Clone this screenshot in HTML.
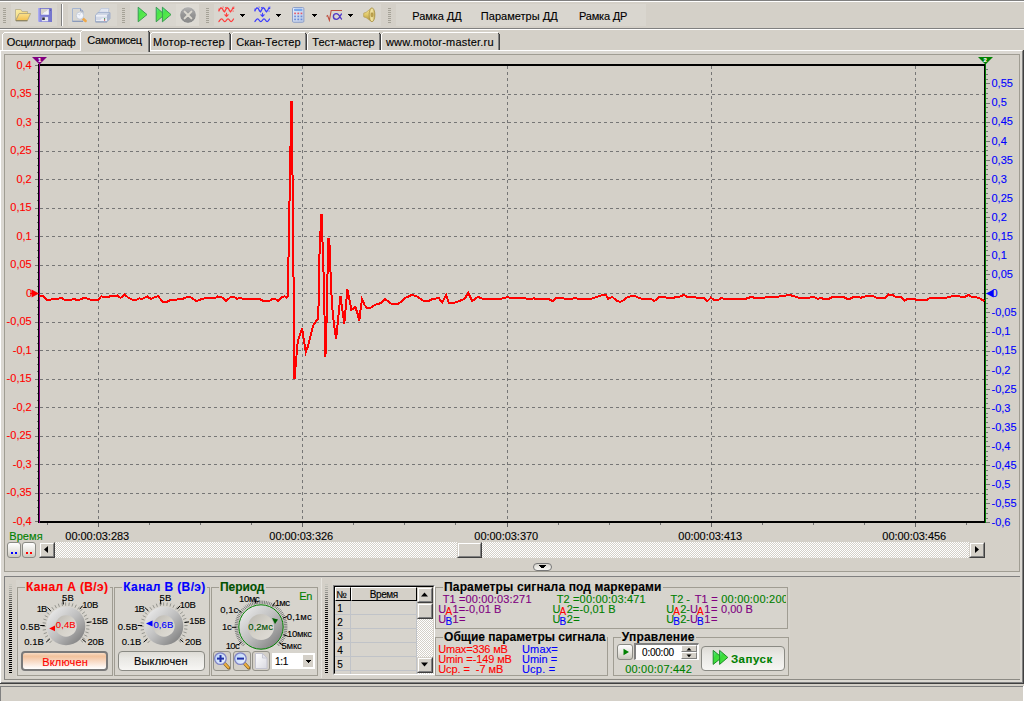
<!DOCTYPE html>
<html><head><meta charset="utf-8"><title>Motor-Master</title><style>
html,body{margin:0;padding:0;}
body{width:1024px;height:702px;overflow:hidden;background:#d4d0c8;position:relative;font-family:"Liberation Sans",sans-serif;}
div,span.t,svg{position:absolute;box-sizing:border-box;}
span.t{white-space:pre;font-family:"Liberation Sans",sans-serif;-webkit-text-stroke:0.12px currentColor;}
.dith{background-image:conic-gradient(#fff 25%,#d4d0c8 0 50%,#fff 0 75%,#d4d0c8 0);background-size:2px 2px;}
</style></head><body>
<div style="left:0px;top:0px;width:1024px;height:1px;background:#808080"></div>
<div style="left:0px;top:1px;width:1024px;height:1px;background:#fff"></div>
<div style="left:11px;top:4px;width:46px;height:22px;background:#d9d6cf"></div>
<div style="left:68px;top:4px;width:49px;height:22px;background:#d9d6cf"></div>
<div style="left:130px;top:4px;width:69px;height:22px;background:#d9d6cf"></div>
<div style="left:214px;top:4px;width:167px;height:22px;background:#d9d6cf"></div>
<div style="left:396px;top:4px;width:250px;height:22px;background:#d9d6cf"></div>
<div style="left:3px;top:8px;width:3px;height:1px;background:#a5a297"></div>
<div style="left:3px;top:10px;width:3px;height:1px;background:#a5a297"></div>
<div style="left:3px;top:12px;width:3px;height:1px;background:#a5a297"></div>
<div style="left:3px;top:14px;width:3px;height:1px;background:#a5a297"></div>
<div style="left:3px;top:16px;width:3px;height:1px;background:#a5a297"></div>
<div style="left:3px;top:18px;width:3px;height:1px;background:#a5a297"></div>
<div style="left:3px;top:20px;width:3px;height:1px;background:#a5a297"></div>
<div style="left:3px;top:22px;width:3px;height:1px;background:#a5a297"></div>
<div style="left:122px;top:8px;width:3px;height:1px;background:#a5a297"></div>
<div style="left:122px;top:10px;width:3px;height:1px;background:#a5a297"></div>
<div style="left:122px;top:12px;width:3px;height:1px;background:#a5a297"></div>
<div style="left:122px;top:14px;width:3px;height:1px;background:#a5a297"></div>
<div style="left:122px;top:16px;width:3px;height:1px;background:#a5a297"></div>
<div style="left:122px;top:18px;width:3px;height:1px;background:#a5a297"></div>
<div style="left:122px;top:20px;width:3px;height:1px;background:#a5a297"></div>
<div style="left:122px;top:22px;width:3px;height:1px;background:#a5a297"></div>
<div style="left:206px;top:8px;width:3px;height:1px;background:#a5a297"></div>
<div style="left:206px;top:10px;width:3px;height:1px;background:#a5a297"></div>
<div style="left:206px;top:12px;width:3px;height:1px;background:#a5a297"></div>
<div style="left:206px;top:14px;width:3px;height:1px;background:#a5a297"></div>
<div style="left:206px;top:16px;width:3px;height:1px;background:#a5a297"></div>
<div style="left:206px;top:18px;width:3px;height:1px;background:#a5a297"></div>
<div style="left:206px;top:20px;width:3px;height:1px;background:#a5a297"></div>
<div style="left:206px;top:22px;width:3px;height:1px;background:#a5a297"></div>
<div style="left:388px;top:8px;width:3px;height:1px;background:#a5a297"></div>
<div style="left:388px;top:10px;width:3px;height:1px;background:#a5a297"></div>
<div style="left:388px;top:12px;width:3px;height:1px;background:#a5a297"></div>
<div style="left:388px;top:14px;width:3px;height:1px;background:#a5a297"></div>
<div style="left:388px;top:16px;width:3px;height:1px;background:#a5a297"></div>
<div style="left:388px;top:18px;width:3px;height:1px;background:#a5a297"></div>
<div style="left:388px;top:20px;width:3px;height:1px;background:#a5a297"></div>
<div style="left:388px;top:22px;width:3px;height:1px;background:#a5a297"></div>
<div style="left:61px;top:4px;width:1px;height:22px;background:#808080"></div>
<div style="left:62px;top:4px;width:1px;height:22px;background:#fff"></div>
<div style="left:0px;top:28px;width:1024px;height:1px;background:#808080"></div>
<div style="left:0px;top:29px;width:1024px;height:1px;background:#fff"></div>
<span id="t0" class="t" style="left:412.34px;top:10.56px;font-size:11px;line-height:11px;color:#000;letter-spacing:-0.058px;">Рамка ДД</span>
<span id="t1" class="t" style="left:480.84px;top:10.56px;font-size:11px;line-height:11px;color:#000;letter-spacing:0.019px;">Параметры ДД</span>
<span id="t2" class="t" style="left:578.94px;top:10.56px;font-size:11px;line-height:11px;color:#000;letter-spacing:-0.169px;">Рамка ДР</span>
<div style="left:0px;top:50px;width:1022px;height:1px;background:#fff"></div>
<div style="left:0px;top:50px;width:1px;height:633px;background:#fff"></div>
<div style="left:1022px;top:51px;width:1px;height:632px;background:#808080"></div>
<div style="left:1023px;top:50px;width:1px;height:634px;background:#404040"></div>
<div style="left:1px;top:682px;width:1022px;height:1px;background:#808080"></div>
<div style="left:0px;top:683px;width:1024px;height:1px;background:#404040"></div>
<div style="left:1px;top:51px;width:1021px;height:631px;background:#dbd8d2"></div>
<div style="left:4px;top:32px;width:76px;height:1px;background:#fff"></div>
<div style="left:3px;top:33px;width:1px;height:1px;background:#fff"></div>
<div style="left:2px;top:34px;width:1px;height:16px;background:#fff"></div>
<div style="left:80px;top:34px;width:1px;height:16px;background:#808080"></div>
<div style="left:81px;top:34px;width:1px;height:16px;background:#404040"></div>
<div style="left:80px;top:33px;width:1px;height:1px;background:#404040"></div>
<span id="t3" class="t" style="left:6.84px;top:36.56px;font-size:11px;line-height:11px;color:#000;letter-spacing:-0.188px;">Осциллограф</span>
<div style="left:152px;top:32px;width:77px;height:1px;background:#fff"></div>
<div style="left:151px;top:33px;width:1px;height:1px;background:#fff"></div>
<div style="left:150px;top:34px;width:1px;height:16px;background:#fff"></div>
<div style="left:229px;top:34px;width:1px;height:16px;background:#808080"></div>
<div style="left:230px;top:34px;width:1px;height:16px;background:#404040"></div>
<div style="left:229px;top:33px;width:1px;height:1px;background:#404040"></div>
<span id="t4" class="t" style="left:153.04px;top:36.56px;font-size:11px;line-height:11px;color:#000;letter-spacing:0.179px;">Мотор-тестер</span>
<div style="left:233px;top:32px;width:72px;height:1px;background:#fff"></div>
<div style="left:232px;top:33px;width:1px;height:1px;background:#fff"></div>
<div style="left:231px;top:34px;width:1px;height:16px;background:#fff"></div>
<div style="left:305px;top:34px;width:1px;height:16px;background:#808080"></div>
<div style="left:306px;top:34px;width:1px;height:16px;background:#404040"></div>
<div style="left:305px;top:33px;width:1px;height:1px;background:#404040"></div>
<span id="t5" class="t" style="left:236.14px;top:36.56px;font-size:11px;line-height:11px;color:#000;letter-spacing:0.071px;">Скан-Тестер</span>
<div style="left:309px;top:32px;width:70px;height:1px;background:#fff"></div>
<div style="left:308px;top:33px;width:1px;height:1px;background:#fff"></div>
<div style="left:307px;top:34px;width:1px;height:16px;background:#fff"></div>
<div style="left:379px;top:34px;width:1px;height:16px;background:#808080"></div>
<div style="left:380px;top:34px;width:1px;height:16px;background:#404040"></div>
<div style="left:379px;top:33px;width:1px;height:1px;background:#404040"></div>
<span id="t6" class="t" style="left:312.34px;top:36.56px;font-size:11px;line-height:11px;color:#000;letter-spacing:-0.041px;">Тест-мастер</span>
<div style="left:383px;top:32px;width:115px;height:1px;background:#fff"></div>
<div style="left:382px;top:33px;width:1px;height:1px;background:#fff"></div>
<div style="left:381px;top:34px;width:1px;height:16px;background:#fff"></div>
<div style="left:498px;top:34px;width:1px;height:16px;background:#808080"></div>
<div style="left:499px;top:34px;width:1px;height:16px;background:#404040"></div>
<div style="left:498px;top:33px;width:1px;height:1px;background:#404040"></div>
<span id="t7" class="t" style="left:385.94px;top:36.56px;font-size:11px;line-height:11px;color:#000;letter-spacing:0.205px;">www.motor-master.ru</span>
<div style="left:80px;top:30px;width:70px;height:22px;background:#d4d0c8"></div>
<div style="left:82px;top:30px;width:66px;height:1px;background:#fff"></div>
<div style="left:81px;top:31px;width:1px;height:1px;background:#fff"></div>
<div style="left:80px;top:32px;width:1px;height:19px;background:#fff"></div>
<div style="left:148px;top:32px;width:1px;height:20px;background:#808080"></div>
<div style="left:149px;top:32px;width:1px;height:20px;background:#404040"></div>
<div style="left:148px;top:31px;width:1px;height:1px;background:#404040"></div>
<span id="t8" class="t" style="left:87.34px;top:34.56px;font-size:11px;line-height:11px;color:#000;letter-spacing:-0.397px;">Самописец</span>
<div style="left:4px;top:54px;width:1016px;height:518px;border:1px solid #a09d93;background:#d4d0c8"></div>
<svg style="left:0;top:0" width="1024" height="702" viewBox="0 0 1024 702" shape-rendering="crispEdges"><line x1="40" x2="984" y1="94.5" y2="94.5" stroke="#767676" stroke-width="1" stroke-dasharray="3 3"/><line x1="40" x2="984" y1="122.5" y2="122.5" stroke="#767676" stroke-width="1" stroke-dasharray="3 3"/><line x1="40" x2="984" y1="151.5" y2="151.5" stroke="#767676" stroke-width="1" stroke-dasharray="3 3"/><line x1="40" x2="984" y1="179.5" y2="179.5" stroke="#767676" stroke-width="1" stroke-dasharray="3 3"/><line x1="40" x2="984" y1="208.5" y2="208.5" stroke="#767676" stroke-width="1" stroke-dasharray="3 3"/><line x1="40" x2="984" y1="236.5" y2="236.5" stroke="#767676" stroke-width="1" stroke-dasharray="3 3"/><line x1="40" x2="984" y1="265.5" y2="265.5" stroke="#767676" stroke-width="1" stroke-dasharray="3 3"/><line x1="40" x2="984" y1="293.5" y2="293.5" stroke="#767676" stroke-width="1" stroke-dasharray="3 3"/><line x1="40" x2="984" y1="322.5" y2="322.5" stroke="#767676" stroke-width="1" stroke-dasharray="3 3"/><line x1="40" x2="984" y1="350.5" y2="350.5" stroke="#767676" stroke-width="1" stroke-dasharray="3 3"/><line x1="40" x2="984" y1="379.5" y2="379.5" stroke="#767676" stroke-width="1" stroke-dasharray="3 3"/><line x1="40" x2="984" y1="407.5" y2="407.5" stroke="#767676" stroke-width="1" stroke-dasharray="3 3"/><line x1="40" x2="984" y1="436.5" y2="436.5" stroke="#767676" stroke-width="1" stroke-dasharray="3 3"/><line x1="40" x2="984" y1="464.5" y2="464.5" stroke="#767676" stroke-width="1" stroke-dasharray="3 3"/><line x1="40" x2="984" y1="493.5" y2="493.5" stroke="#767676" stroke-width="1" stroke-dasharray="3 3"/><line x1="98.5" x2="98.5" y1="66" y2="521" stroke="#767676" stroke-width="1" stroke-dasharray="3 3"/><line x1="98.5" x2="98.5" y1="523" y2="527" stroke="#606060" stroke-width="1"/><line x1="302.5" x2="302.5" y1="66" y2="521" stroke="#767676" stroke-width="1" stroke-dasharray="3 3"/><line x1="302.5" x2="302.5" y1="523" y2="527" stroke="#606060" stroke-width="1"/><line x1="507.5" x2="507.5" y1="66" y2="521" stroke="#767676" stroke-width="1" stroke-dasharray="3 3"/><line x1="507.5" x2="507.5" y1="523" y2="527" stroke="#606060" stroke-width="1"/><line x1="711.5" x2="711.5" y1="66" y2="521" stroke="#767676" stroke-width="1" stroke-dasharray="3 3"/><line x1="711.5" x2="711.5" y1="523" y2="527" stroke="#606060" stroke-width="1"/><line x1="915.5" x2="915.5" y1="66" y2="521" stroke="#767676" stroke-width="1" stroke-dasharray="3 3"/><line x1="915.5" x2="915.5" y1="523" y2="527" stroke="#606060" stroke-width="1"/><line x1="47.5" x2="47.5" y1="523" y2="525" stroke="#707070" stroke-width="1"/><line x1="149.5" x2="149.5" y1="523" y2="525" stroke="#707070" stroke-width="1"/><line x1="200.5" x2="200.5" y1="523" y2="525" stroke="#707070" stroke-width="1"/><line x1="251.5" x2="251.5" y1="523" y2="525" stroke="#707070" stroke-width="1"/><line x1="353.5" x2="353.5" y1="523" y2="525" stroke="#707070" stroke-width="1"/><line x1="404.5" x2="404.5" y1="523" y2="525" stroke="#707070" stroke-width="1"/><line x1="455.5" x2="455.5" y1="523" y2="525" stroke="#707070" stroke-width="1"/><line x1="558.5" x2="558.5" y1="523" y2="525" stroke="#707070" stroke-width="1"/><line x1="609.5" x2="609.5" y1="523" y2="525" stroke="#707070" stroke-width="1"/><line x1="660.5" x2="660.5" y1="523" y2="525" stroke="#707070" stroke-width="1"/><line x1="762.5" x2="762.5" y1="523" y2="525" stroke="#707070" stroke-width="1"/><line x1="813.5" x2="813.5" y1="523" y2="525" stroke="#707070" stroke-width="1"/><line x1="864.5" x2="864.5" y1="523" y2="525" stroke="#707070" stroke-width="1"/><line x1="966.5" x2="966.5" y1="523" y2="525" stroke="#707070" stroke-width="1"/><line x1="35" x2="38" y1="65.5" y2="65.5" stroke="#767676" stroke-width="1"/><line x1="37" x2="38" y1="72.5" y2="72.5" stroke="#6a6a6a" stroke-width="1"/><line x1="37" x2="38" y1="79.5" y2="79.5" stroke="#6a6a6a" stroke-width="1"/><line x1="37" x2="38" y1="86.5" y2="86.5" stroke="#6a6a6a" stroke-width="1"/><line x1="35" x2="38" y1="94.5" y2="94.5" stroke="#767676" stroke-width="1"/><line x1="37" x2="38" y1="101.5" y2="101.5" stroke="#6a6a6a" stroke-width="1"/><line x1="37" x2="38" y1="108.5" y2="108.5" stroke="#6a6a6a" stroke-width="1"/><line x1="37" x2="38" y1="115.5" y2="115.5" stroke="#6a6a6a" stroke-width="1"/><line x1="35" x2="38" y1="122.5" y2="122.5" stroke="#767676" stroke-width="1"/><line x1="37" x2="38" y1="129.5" y2="129.5" stroke="#6a6a6a" stroke-width="1"/><line x1="37" x2="38" y1="136.5" y2="136.5" stroke="#6a6a6a" stroke-width="1"/><line x1="37" x2="38" y1="143.5" y2="143.5" stroke="#6a6a6a" stroke-width="1"/><line x1="35" x2="38" y1="151.5" y2="151.5" stroke="#767676" stroke-width="1"/><line x1="37" x2="38" y1="158.5" y2="158.5" stroke="#6a6a6a" stroke-width="1"/><line x1="37" x2="38" y1="165.5" y2="165.5" stroke="#6a6a6a" stroke-width="1"/><line x1="37" x2="38" y1="172.5" y2="172.5" stroke="#6a6a6a" stroke-width="1"/><line x1="35" x2="38" y1="179.5" y2="179.5" stroke="#767676" stroke-width="1"/><line x1="37" x2="38" y1="186.5" y2="186.5" stroke="#6a6a6a" stroke-width="1"/><line x1="37" x2="38" y1="193.5" y2="193.5" stroke="#6a6a6a" stroke-width="1"/><line x1="37" x2="38" y1="200.5" y2="200.5" stroke="#6a6a6a" stroke-width="1"/><line x1="35" x2="38" y1="208.5" y2="208.5" stroke="#767676" stroke-width="1"/><line x1="37" x2="38" y1="215.5" y2="215.5" stroke="#6a6a6a" stroke-width="1"/><line x1="37" x2="38" y1="222.5" y2="222.5" stroke="#6a6a6a" stroke-width="1"/><line x1="37" x2="38" y1="229.5" y2="229.5" stroke="#6a6a6a" stroke-width="1"/><line x1="35" x2="38" y1="236.5" y2="236.5" stroke="#767676" stroke-width="1"/><line x1="37" x2="38" y1="243.5" y2="243.5" stroke="#6a6a6a" stroke-width="1"/><line x1="37" x2="38" y1="250.5" y2="250.5" stroke="#6a6a6a" stroke-width="1"/><line x1="37" x2="38" y1="257.5" y2="257.5" stroke="#6a6a6a" stroke-width="1"/><line x1="35" x2="38" y1="265.5" y2="265.5" stroke="#767676" stroke-width="1"/><line x1="37" x2="38" y1="272.5" y2="272.5" stroke="#6a6a6a" stroke-width="1"/><line x1="37" x2="38" y1="279.5" y2="279.5" stroke="#6a6a6a" stroke-width="1"/><line x1="37" x2="38" y1="286.5" y2="286.5" stroke="#6a6a6a" stroke-width="1"/><line x1="35" x2="38" y1="293.5" y2="293.5" stroke="#767676" stroke-width="1"/><line x1="37" x2="38" y1="300.5" y2="300.5" stroke="#6a6a6a" stroke-width="1"/><line x1="37" x2="38" y1="307.5" y2="307.5" stroke="#6a6a6a" stroke-width="1"/><line x1="37" x2="38" y1="314.5" y2="314.5" stroke="#6a6a6a" stroke-width="1"/><line x1="35" x2="38" y1="322.5" y2="322.5" stroke="#767676" stroke-width="1"/><line x1="37" x2="38" y1="329.5" y2="329.5" stroke="#6a6a6a" stroke-width="1"/><line x1="37" x2="38" y1="336.5" y2="336.5" stroke="#6a6a6a" stroke-width="1"/><line x1="37" x2="38" y1="343.5" y2="343.5" stroke="#6a6a6a" stroke-width="1"/><line x1="35" x2="38" y1="350.5" y2="350.5" stroke="#767676" stroke-width="1"/><line x1="37" x2="38" y1="357.5" y2="357.5" stroke="#6a6a6a" stroke-width="1"/><line x1="37" x2="38" y1="364.5" y2="364.5" stroke="#6a6a6a" stroke-width="1"/><line x1="37" x2="38" y1="371.5" y2="371.5" stroke="#6a6a6a" stroke-width="1"/><line x1="35" x2="38" y1="379.5" y2="379.5" stroke="#767676" stroke-width="1"/><line x1="37" x2="38" y1="386.5" y2="386.5" stroke="#6a6a6a" stroke-width="1"/><line x1="37" x2="38" y1="393.5" y2="393.5" stroke="#6a6a6a" stroke-width="1"/><line x1="37" x2="38" y1="400.5" y2="400.5" stroke="#6a6a6a" stroke-width="1"/><line x1="35" x2="38" y1="407.5" y2="407.5" stroke="#767676" stroke-width="1"/><line x1="37" x2="38" y1="414.5" y2="414.5" stroke="#6a6a6a" stroke-width="1"/><line x1="37" x2="38" y1="421.5" y2="421.5" stroke="#6a6a6a" stroke-width="1"/><line x1="37" x2="38" y1="428.5" y2="428.5" stroke="#6a6a6a" stroke-width="1"/><line x1="35" x2="38" y1="436.5" y2="436.5" stroke="#767676" stroke-width="1"/><line x1="37" x2="38" y1="443.5" y2="443.5" stroke="#6a6a6a" stroke-width="1"/><line x1="37" x2="38" y1="450.5" y2="450.5" stroke="#6a6a6a" stroke-width="1"/><line x1="37" x2="38" y1="457.5" y2="457.5" stroke="#6a6a6a" stroke-width="1"/><line x1="35" x2="38" y1="464.5" y2="464.5" stroke="#767676" stroke-width="1"/><line x1="37" x2="38" y1="471.5" y2="471.5" stroke="#6a6a6a" stroke-width="1"/><line x1="37" x2="38" y1="478.5" y2="478.5" stroke="#6a6a6a" stroke-width="1"/><line x1="37" x2="38" y1="485.5" y2="485.5" stroke="#6a6a6a" stroke-width="1"/><line x1="35" x2="38" y1="493.5" y2="493.5" stroke="#767676" stroke-width="1"/><line x1="37" x2="38" y1="500.5" y2="500.5" stroke="#6a6a6a" stroke-width="1"/><line x1="37" x2="38" y1="507.5" y2="507.5" stroke="#6a6a6a" stroke-width="1"/><line x1="37" x2="38" y1="514.5" y2="514.5" stroke="#6a6a6a" stroke-width="1"/><line x1="35" x2="38" y1="521.5" y2="521.5" stroke="#767676" stroke-width="1"/><line x1="986" x2="988" y1="69.5" y2="69.5" stroke="#767676" stroke-width="1"/><line x1="986" x2="988" y1="74.5" y2="74.5" stroke="#767676" stroke-width="1"/><line x1="986" x2="988" y1="79.5" y2="79.5" stroke="#767676" stroke-width="1"/><line x1="986" x2="990" y1="83.5" y2="83.5" stroke="#767676" stroke-width="1"/><line x1="986" x2="988" y1="88.5" y2="88.5" stroke="#767676" stroke-width="1"/><line x1="986" x2="988" y1="93.5" y2="93.5" stroke="#767676" stroke-width="1"/><line x1="986" x2="988" y1="98.5" y2="98.5" stroke="#767676" stroke-width="1"/><line x1="986" x2="990" y1="103.5" y2="103.5" stroke="#767676" stroke-width="1"/><line x1="986" x2="988" y1="107.5" y2="107.5" stroke="#767676" stroke-width="1"/><line x1="986" x2="988" y1="112.5" y2="112.5" stroke="#767676" stroke-width="1"/><line x1="986" x2="988" y1="117.5" y2="117.5" stroke="#767676" stroke-width="1"/><line x1="986" x2="990" y1="122.5" y2="122.5" stroke="#767676" stroke-width="1"/><line x1="986" x2="988" y1="126.5" y2="126.5" stroke="#767676" stroke-width="1"/><line x1="986" x2="988" y1="131.5" y2="131.5" stroke="#767676" stroke-width="1"/><line x1="986" x2="988" y1="136.5" y2="136.5" stroke="#767676" stroke-width="1"/><line x1="986" x2="990" y1="141.5" y2="141.5" stroke="#767676" stroke-width="1"/><line x1="986" x2="988" y1="146.5" y2="146.5" stroke="#767676" stroke-width="1"/><line x1="986" x2="988" y1="150.5" y2="150.5" stroke="#767676" stroke-width="1"/><line x1="986" x2="988" y1="155.5" y2="155.5" stroke="#767676" stroke-width="1"/><line x1="986" x2="990" y1="160.5" y2="160.5" stroke="#767676" stroke-width="1"/><line x1="986" x2="988" y1="165.5" y2="165.5" stroke="#767676" stroke-width="1"/><line x1="986" x2="988" y1="169.5" y2="169.5" stroke="#767676" stroke-width="1"/><line x1="986" x2="988" y1="174.5" y2="174.5" stroke="#767676" stroke-width="1"/><line x1="986" x2="990" y1="179.5" y2="179.5" stroke="#767676" stroke-width="1"/><line x1="986" x2="988" y1="184.5" y2="184.5" stroke="#767676" stroke-width="1"/><line x1="986" x2="988" y1="188.5" y2="188.5" stroke="#767676" stroke-width="1"/><line x1="986" x2="988" y1="193.5" y2="193.5" stroke="#767676" stroke-width="1"/><line x1="986" x2="990" y1="198.5" y2="198.5" stroke="#767676" stroke-width="1"/><line x1="986" x2="988" y1="203.5" y2="203.5" stroke="#767676" stroke-width="1"/><line x1="986" x2="988" y1="208.5" y2="208.5" stroke="#767676" stroke-width="1"/><line x1="986" x2="988" y1="212.5" y2="212.5" stroke="#767676" stroke-width="1"/><line x1="986" x2="990" y1="217.5" y2="217.5" stroke="#767676" stroke-width="1"/><line x1="986" x2="988" y1="222.5" y2="222.5" stroke="#767676" stroke-width="1"/><line x1="986" x2="988" y1="227.5" y2="227.5" stroke="#767676" stroke-width="1"/><line x1="986" x2="988" y1="231.5" y2="231.5" stroke="#767676" stroke-width="1"/><line x1="986" x2="990" y1="236.5" y2="236.5" stroke="#767676" stroke-width="1"/><line x1="986" x2="988" y1="241.5" y2="241.5" stroke="#767676" stroke-width="1"/><line x1="986" x2="988" y1="246.5" y2="246.5" stroke="#767676" stroke-width="1"/><line x1="986" x2="988" y1="250.5" y2="250.5" stroke="#767676" stroke-width="1"/><line x1="986" x2="990" y1="255.5" y2="255.5" stroke="#767676" stroke-width="1"/><line x1="986" x2="988" y1="260.5" y2="260.5" stroke="#767676" stroke-width="1"/><line x1="986" x2="988" y1="265.5" y2="265.5" stroke="#767676" stroke-width="1"/><line x1="986" x2="988" y1="270.5" y2="270.5" stroke="#767676" stroke-width="1"/><line x1="986" x2="990" y1="274.5" y2="274.5" stroke="#767676" stroke-width="1"/><line x1="986" x2="988" y1="279.5" y2="279.5" stroke="#767676" stroke-width="1"/><line x1="986" x2="988" y1="284.5" y2="284.5" stroke="#767676" stroke-width="1"/><line x1="986" x2="988" y1="289.5" y2="289.5" stroke="#767676" stroke-width="1"/><line x1="986" x2="990" y1="293.5" y2="293.5" stroke="#767676" stroke-width="1"/><line x1="986" x2="988" y1="298.5" y2="298.5" stroke="#767676" stroke-width="1"/><line x1="986" x2="988" y1="303.5" y2="303.5" stroke="#767676" stroke-width="1"/><line x1="986" x2="988" y1="308.5" y2="308.5" stroke="#767676" stroke-width="1"/><line x1="986" x2="990" y1="312.5" y2="312.5" stroke="#767676" stroke-width="1"/><line x1="986" x2="988" y1="317.5" y2="317.5" stroke="#767676" stroke-width="1"/><line x1="986" x2="988" y1="322.5" y2="322.5" stroke="#767676" stroke-width="1"/><line x1="986" x2="988" y1="327.5" y2="327.5" stroke="#767676" stroke-width="1"/><line x1="986" x2="990" y1="332.5" y2="332.5" stroke="#767676" stroke-width="1"/><line x1="986" x2="988" y1="336.5" y2="336.5" stroke="#767676" stroke-width="1"/><line x1="986" x2="988" y1="341.5" y2="341.5" stroke="#767676" stroke-width="1"/><line x1="986" x2="988" y1="346.5" y2="346.5" stroke="#767676" stroke-width="1"/><line x1="986" x2="990" y1="351.5" y2="351.5" stroke="#767676" stroke-width="1"/><line x1="986" x2="988" y1="355.5" y2="355.5" stroke="#767676" stroke-width="1"/><line x1="986" x2="988" y1="360.5" y2="360.5" stroke="#767676" stroke-width="1"/><line x1="986" x2="988" y1="365.5" y2="365.5" stroke="#767676" stroke-width="1"/><line x1="986" x2="990" y1="370.5" y2="370.5" stroke="#767676" stroke-width="1"/><line x1="986" x2="988" y1="375.5" y2="375.5" stroke="#767676" stroke-width="1"/><line x1="986" x2="988" y1="379.5" y2="379.5" stroke="#767676" stroke-width="1"/><line x1="986" x2="988" y1="384.5" y2="384.5" stroke="#767676" stroke-width="1"/><line x1="986" x2="990" y1="389.5" y2="389.5" stroke="#767676" stroke-width="1"/><line x1="986" x2="988" y1="394.5" y2="394.5" stroke="#767676" stroke-width="1"/><line x1="986" x2="988" y1="398.5" y2="398.5" stroke="#767676" stroke-width="1"/><line x1="986" x2="988" y1="403.5" y2="403.5" stroke="#767676" stroke-width="1"/><line x1="986" x2="990" y1="408.5" y2="408.5" stroke="#767676" stroke-width="1"/><line x1="986" x2="988" y1="413.5" y2="413.5" stroke="#767676" stroke-width="1"/><line x1="986" x2="988" y1="417.5" y2="417.5" stroke="#767676" stroke-width="1"/><line x1="986" x2="988" y1="422.5" y2="422.5" stroke="#767676" stroke-width="1"/><line x1="986" x2="990" y1="427.5" y2="427.5" stroke="#767676" stroke-width="1"/><line x1="986" x2="988" y1="432.5" y2="432.5" stroke="#767676" stroke-width="1"/><line x1="986" x2="988" y1="437.5" y2="437.5" stroke="#767676" stroke-width="1"/><line x1="986" x2="988" y1="441.5" y2="441.5" stroke="#767676" stroke-width="1"/><line x1="986" x2="990" y1="446.5" y2="446.5" stroke="#767676" stroke-width="1"/><line x1="986" x2="988" y1="451.5" y2="451.5" stroke="#767676" stroke-width="1"/><line x1="986" x2="988" y1="456.5" y2="456.5" stroke="#767676" stroke-width="1"/><line x1="986" x2="988" y1="460.5" y2="460.5" stroke="#767676" stroke-width="1"/><line x1="986" x2="990" y1="465.5" y2="465.5" stroke="#767676" stroke-width="1"/><line x1="986" x2="988" y1="470.5" y2="470.5" stroke="#767676" stroke-width="1"/><line x1="986" x2="988" y1="475.5" y2="475.5" stroke="#767676" stroke-width="1"/><line x1="986" x2="988" y1="479.5" y2="479.5" stroke="#767676" stroke-width="1"/><line x1="986" x2="990" y1="484.5" y2="484.5" stroke="#767676" stroke-width="1"/><line x1="986" x2="988" y1="489.5" y2="489.5" stroke="#767676" stroke-width="1"/><line x1="986" x2="988" y1="494.5" y2="494.5" stroke="#767676" stroke-width="1"/><line x1="986" x2="988" y1="499.5" y2="499.5" stroke="#767676" stroke-width="1"/><line x1="986" x2="990" y1="503.5" y2="503.5" stroke="#767676" stroke-width="1"/><line x1="986" x2="988" y1="508.5" y2="508.5" stroke="#767676" stroke-width="1"/><line x1="986" x2="988" y1="513.5" y2="513.5" stroke="#767676" stroke-width="1"/><line x1="986" x2="988" y1="518.5" y2="518.5" stroke="#767676" stroke-width="1"/><line x1="986" x2="990" y1="522.5" y2="522.5" stroke="#767676" stroke-width="1"/></svg>
<div style="left:38px;top:64px;width:948px;height:2px;background:#000"></div>
<div style="left:38px;top:521px;width:948px;height:2px;background:#000"></div>
<div style="left:38px;top:64px;width:1px;height:459px;background:#000"></div>
<div style="left:39px;top:64px;width:1px;height:459px;background:#800080"></div>
<div style="left:984px;top:64px;width:1px;height:459px;background:#000"></div>
<div style="left:985px;top:64px;width:1px;height:459px;background:#008000"></div>
<svg style="left:30px;top:56px" width="20" height="10" viewBox="0 0 20 10"><polygon points="2,1 17,1 9.5,8.6" fill="#800080"/></svg>
<svg style="left:976px;top:56px" width="20" height="10" viewBox="0 0 20 10"><polygon points="2,1 17,1 9.5,8.6" fill="#008000"/></svg>
<span id="t9" class="t" style="left:38.00px;top:56.72px;font-size:6px;line-height:6px;color:#fff;font-weight:bold;">1</span>
<span id="t10" class="t" style="left:983.50px;top:56.72px;font-size:6px;line-height:6px;color:#fff;font-weight:bold;">2</span>
<span id="t11" class="t" style="left:16.40px;top:59.56px;font-size:11px;line-height:11px;color:#ff0000;">0,4</span>
<span id="t12" class="t" style="left:10.28px;top:88.06px;font-size:11px;line-height:11px;color:#ff0000;">0,35</span>
<span id="t13" class="t" style="left:16.40px;top:116.56px;font-size:11px;line-height:11px;color:#ff0000;">0,3</span>
<span id="t14" class="t" style="left:10.28px;top:145.06px;font-size:11px;line-height:11px;color:#ff0000;">0,25</span>
<span id="t15" class="t" style="left:16.40px;top:173.56px;font-size:11px;line-height:11px;color:#ff0000;">0,2</span>
<span id="t16" class="t" style="left:10.28px;top:202.06px;font-size:11px;line-height:11px;color:#ff0000;">0,15</span>
<span id="t17" class="t" style="left:16.40px;top:230.56px;font-size:11px;line-height:11px;color:#ff0000;">0,1</span>
<span id="t18" class="t" style="left:10.28px;top:259.06px;font-size:11px;line-height:11px;color:#ff0000;">0,05</span>
<span id="t19" class="t" style="left:6.62px;top:316.06px;font-size:11px;line-height:11px;color:#ff0000;">-0,05</span>
<span id="t20" class="t" style="left:12.73px;top:344.56px;font-size:11px;line-height:11px;color:#ff0000;">-0,1</span>
<span id="t21" class="t" style="left:6.62px;top:373.06px;font-size:11px;line-height:11px;color:#ff0000;">-0,15</span>
<span id="t22" class="t" style="left:12.73px;top:401.56px;font-size:11px;line-height:11px;color:#ff0000;">-0,2</span>
<span id="t23" class="t" style="left:6.62px;top:430.06px;font-size:11px;line-height:11px;color:#ff0000;">-0,25</span>
<span id="t24" class="t" style="left:12.73px;top:458.56px;font-size:11px;line-height:11px;color:#ff0000;">-0,3</span>
<span id="t25" class="t" style="left:6.62px;top:487.06px;font-size:11px;line-height:11px;color:#ff0000;">-0,35</span>
<span id="t26" class="t" style="left:12.73px;top:515.56px;font-size:11px;line-height:11px;color:#ff0000;">-0,4</span>
<span id="t27" class="t" style="left:991.50px;top:78.25px;font-size:11px;line-height:11px;color:#0000ff;">0,55</span>
<span id="t28" class="t" style="left:991.50px;top:97.33px;font-size:11px;line-height:11px;color:#0000ff;">0,5</span>
<span id="t29" class="t" style="left:991.50px;top:116.41px;font-size:11px;line-height:11px;color:#0000ff;">0,45</span>
<span id="t30" class="t" style="left:991.50px;top:135.50px;font-size:11px;line-height:11px;color:#0000ff;">0,4</span>
<span id="t31" class="t" style="left:991.50px;top:154.58px;font-size:11px;line-height:11px;color:#0000ff;">0,35</span>
<span id="t32" class="t" style="left:991.50px;top:173.66px;font-size:11px;line-height:11px;color:#0000ff;">0,3</span>
<span id="t33" class="t" style="left:991.50px;top:192.75px;font-size:11px;line-height:11px;color:#0000ff;">0,25</span>
<span id="t34" class="t" style="left:991.50px;top:211.83px;font-size:11px;line-height:11px;color:#0000ff;">0,2</span>
<span id="t35" class="t" style="left:991.50px;top:230.91px;font-size:11px;line-height:11px;color:#0000ff;">0,15</span>
<span id="t36" class="t" style="left:991.50px;top:250.00px;font-size:11px;line-height:11px;color:#0000ff;">0,1</span>
<span id="t37" class="t" style="left:991.50px;top:269.08px;font-size:11px;line-height:11px;color:#0000ff;">0,05</span>
<span id="t38" class="t" style="left:991.50px;top:307.25px;font-size:11px;line-height:11px;color:#0000ff;">-0,05</span>
<span id="t39" class="t" style="left:991.50px;top:326.33px;font-size:11px;line-height:11px;color:#0000ff;">-0,1</span>
<span id="t40" class="t" style="left:991.50px;top:345.41px;font-size:11px;line-height:11px;color:#0000ff;">-0,15</span>
<span id="t41" class="t" style="left:991.50px;top:364.50px;font-size:11px;line-height:11px;color:#0000ff;">-0,2</span>
<span id="t42" class="t" style="left:991.50px;top:383.58px;font-size:11px;line-height:11px;color:#0000ff;">-0,25</span>
<span id="t43" class="t" style="left:991.50px;top:402.66px;font-size:11px;line-height:11px;color:#0000ff;">-0,3</span>
<span id="t44" class="t" style="left:991.50px;top:421.75px;font-size:11px;line-height:11px;color:#0000ff;">-0,35</span>
<span id="t45" class="t" style="left:991.50px;top:440.83px;font-size:11px;line-height:11px;color:#0000ff;">-0,4</span>
<span id="t46" class="t" style="left:991.50px;top:459.91px;font-size:11px;line-height:11px;color:#0000ff;">-0,45</span>
<span id="t47" class="t" style="left:991.50px;top:479.00px;font-size:11px;line-height:11px;color:#0000ff;">-0,5</span>
<span id="t48" class="t" style="left:991.50px;top:498.08px;font-size:11px;line-height:11px;color:#0000ff;">-0,55</span>
<span id="t49" class="t" style="left:991.50px;top:517.16px;font-size:11px;line-height:11px;color:#0000ff;">-0,6</span>
<span id="t50" class="t" style="left:26.00px;top:287.56px;font-size:11px;line-height:11px;color:#ff0000;">0</span>
<svg style="left:29px;top:288px" width="11" height="11" viewBox="0 0 11 11"><polygon points="2.6,1.6 2.6,9.4 10,5.5" fill="#ff0000"/><rect x="1" y="5" width="3" height="1" fill="#ff0000"/></svg>
<span id="t51" class="t" style="left:991.50px;top:287.56px;font-size:11px;line-height:11px;color:#0000ff;">0</span>
<svg style="left:985px;top:288px" width="11" height="11" viewBox="0 0 11 11"><polygon points="8.6,1.6 8.6,9.4 1,5.5" fill="#0000ff"/></svg>
<svg style="left:0;top:0" width="1024" height="702" viewBox="0 0 1024 702"><polyline points="39.7,295.6 43.3,296.4 47.2,300.0 51.0,299.5 58.1,298.8 61.3,298.0 65.2,300.0 70.6,300.0 73.8,298.8 76.9,300.0 80.0,299.5 83.9,298.0 87.0,298.4 91.7,300.0 98.0,300.0 101.1,296.4 105.0,296.9 107.3,297.5 109.7,296.4 115.2,296.1 117.5,295.3 120.6,298.0 124.5,294.4 127.7,297.2 131.6,299.5 136.3,300.0 139.4,298.4 142.5,298.8 144.8,297.5 147.2,296.4 151.1,299.1 155.0,296.9 158.1,296.4 162.8,301.6 167.5,301.6 170.6,300.0 176.9,299.5 183.1,298.8 187.0,296.9 190.9,297.5 195.6,300.6 198.0,300.6 201.9,299.0 205.8,298.0 215.9,297.5 217.5,296.4 221.4,296.9 226.1,301.1 230.8,296.9 233.9,296.9 237.0,298.8 240.2,298.0 244.0,299.0 259.7,299.0 263.6,301.1 269.0,301.1 272.2,299.0 275.3,299.0 278.4,301.1 282.3,296.9 284.7,296.4 286.3,297.5 287.6,296.4 287.9,291.0 291.3,102.0 291.8,102.0 294.5,379.0 296.2,359.0 297.7,342.0 299.8,334.9 302.2,328.4 304.1,342.0 305.9,352.0 308.4,344.8 310.5,336.3 313.0,325.6 315.5,322.0 318.2,318.5 318.7,299.0 319.0,267.0 320.0,241.0 321.4,215.0 321.9,215.0 322.7,250.0 324.0,285.0 324.6,320.6 325.4,357.0 326.4,327.7 327.3,290.0 328.0,239.0 329.3,239.0 330.0,261.0 331.1,285.0 331.9,303.5 334.0,324.9 336.1,339.0 338.3,317.8 340.4,295.7 342.5,310.6 344.3,323.5 346.1,303.5 347.5,289.6 349.7,300.7 351.4,310.0 355.4,307.0 357.5,313.5 359.2,321.3 360.6,309.2 362.1,299.2 364.6,305.0 366.8,307.8 371.0,307.5 374.7,305.0 380.9,303.1 385.3,299.0 390.3,303.4 398.1,304.2 405.2,298.0 412.2,294.8 416.9,296.4 423.9,301.1 428.6,301.1 432.5,299.0 438.8,298.0 442.2,302.7 446.1,294.8 448.9,303.1 452.8,303.1 459.1,301.1 464.5,299.0 468.1,292.8 472.3,301.1 477.8,296.9 483.3,299.0 499.7,299.0 507.5,297.2 510.6,298.0 524.7,298.4 530.0,299.0 534.0,298.4 537.2,299.0 548.9,299.0 552.5,301.1 555.9,298.0 562.2,298.0 565.3,299.0 571.6,299.0 574.7,298.0 579.4,299.0 590.3,299.0 596.6,296.9 601.3,295.3 605.9,294.8 608.3,299.0 612.2,296.9 616.1,300.3 620.0,301.9 623.9,300.0 627.8,296.9 634.1,295.6 638.8,298.0 643.4,299.0 651.3,299.0 654.4,301.1 659.1,296.9 664.5,296.9 666.9,298.0 673.1,298.0 676.3,296.9 680.9,296.4 684.1,294.8 687.2,296.9 695.0,296.9 696.6,298.0 703.6,298.0 707.5,301.1 710.9,297.5 713.8,300.0 718.4,300.0 721.6,298.0 724.7,299.0 745.0,299.0 751.3,296.9 755.2,298.0 763.8,298.0 766.9,296.9 782.5,296.4 788.8,294.8 793.4,296.0 799.7,298.0 809.1,298.0 811.4,296.9 814.5,297.2 817.7,299.0 820.8,298.0 823.9,299.0 829.7,298.5 833.2,296.7 842.9,296.7 846.4,298.5 850.8,298.5 853.4,296.7 856.9,297.2 861.3,297.6 867.5,295.8 872.7,295.8 876.2,297.6 885.9,297.6 888.6,294.4 892.1,294.9 895.6,296.7 900.9,297.2 904.4,300.7 907.9,298.5 914.9,299.0 915.8,299.7 927.2,299.7 930.7,297.6 941.3,297.6 943.9,298.5 949.2,296.7 958.9,295.8 960.6,296.7 965.0,296.7 968.5,294.9 971.2,296.7 976.4,297.2 980.0,298.5 984.3,301.1" fill="none" stroke="#ff0000" stroke-width="2" stroke-linejoin="miter" shape-rendering="crispEdges"/></svg>
<span id="t52" class="t" style="left:9.34px;top:530.56px;font-size:11px;line-height:11px;color:#008000;letter-spacing:0.045px;">Время</span>
<span id="t53" class="t" style="left:65.34px;top:530.56px;font-size:11px;line-height:11px;color:#000;letter-spacing:-0.035px;">00:00:03:283</span>
<span id="t54" class="t" style="left:269.34px;top:530.56px;font-size:11px;line-height:11px;color:#000;letter-spacing:-0.035px;">00:00:03:326</span>
<span id="t55" class="t" style="left:474.34px;top:530.56px;font-size:11px;line-height:11px;color:#000;letter-spacing:-0.035px;">00:00:03:370</span>
<span id="t56" class="t" style="left:678.34px;top:530.56px;font-size:11px;line-height:11px;color:#000;letter-spacing:-0.035px;">00:00:03:413</span>
<span id="t57" class="t" style="left:882.34px;top:530.56px;font-size:11px;line-height:11px;color:#000;letter-spacing:-0.035px;">00:00:03:456</span>
<div style="left:55px;top:542px;width:914px;height:16px;"></div>
<div class="dith" style="left:55px;top:542px;width:914px;height:16px"></div>
<div style="left:39px;top:542px;width:16px;height:16px;background:#d4d0c8;border-top:1px solid #d4d0c8;border-left:1px solid #d4d0c8;border-right:1px solid #404040;border-bottom:1px solid #404040"><div style="left:0;top:0;width:14px;height:14px;border-top:1px solid #fff;border-left:1px solid #fff;border-right:1px solid #808080;border-bottom:1px solid #808080"></div><svg style="left:2px;top:2px" width="9" height="9" viewBox="0 0 9 9"><polygon points="6,1 6,8 2,4.5" fill="#000"/></svg></div>
<div style="left:969px;top:542px;width:16px;height:16px;background:#d4d0c8;border-top:1px solid #d4d0c8;border-left:1px solid #d4d0c8;border-right:1px solid #404040;border-bottom:1px solid #404040"><div style="left:0;top:0;width:14px;height:14px;border-top:1px solid #fff;border-left:1px solid #fff;border-right:1px solid #808080;border-bottom:1px solid #808080"></div><svg style="left:2px;top:2px" width="9" height="9" viewBox="0 0 9 9"><polygon points="3,1 3,8 7,4.5" fill="#000"/></svg></div>
<div style="left:457px;top:542px;width:25px;height:16px;background:#d4d0c8;border-top:1px solid #d4d0c8;border-left:1px solid #d4d0c8;border-right:1px solid #404040;border-bottom:1px solid #404040"><div style="left:0;top:0;width:23px;height:14px;border-top:1px solid #fff;border-left:1px solid #fff;border-right:1px solid #808080;border-bottom:1px solid #808080"></div></div>
<div style="left:7px;top:542px;width:14px;height:16px;border:1px solid #8a8a84;border-radius:3px;background:linear-gradient(#fff,#e4e2dc 60%,#c9c6bd)"><div style="left:3px;top:9px;width:2px;height:2px;background:#00f"></div><div style="left:7px;top:9px;width:2px;height:2px;background:#00f"></div></div>
<div style="left:22px;top:542px;width:14px;height:16px;border:1px solid #8a8a84;border-radius:3px;background:linear-gradient(#fff,#e4e2dc 60%,#c9c6bd)"><div style="left:3px;top:9px;width:2px;height:2px;background:#f00"></div><div style="left:7px;top:9px;width:2px;height:2px;background:#f00"></div></div>
<div style="left:533px;top:563px;width:19px;height:8px;border:1px solid #777;border-radius:4px;background:linear-gradient(#d8d5ce,#efeeea 70%,#f6f5f2)"><svg style="left:5px;top:1px" width="7" height="3" viewBox="0 0 7 3" shape-rendering="crispEdges"><rect x="0" y="0" width="7" height="1"/><rect x="1" y="1" width="5" height="1"/><rect x="2" y="2" width="3" height="1"/></svg></div>
<div style="left:4px;top:576px;width:1016px;height:104px;background:#d4d0c8"></div>
<div style="left:4px;top:576px;width:1016px;height:1px;background:#808080"></div>
<div style="left:4px;top:576px;width:1px;height:104px;background:#808080"></div>
<div style="left:4px;top:679px;width:1016px;height:1px;background:#8c8a84"></div>
<div style="left:16px;top:580px;width:305px;height:98px;background:#d7d4cd"></div>
<div style="left:332px;top:580px;width:458px;height:98px;background:#d7d4cd"></div>
<div style="left:9px;top:584px;width:3px;height:1px;background:rgb(200,200,192)"></div>
<div style="left:9px;top:586px;width:3px;height:1px;background:rgb(186,186,178)"></div>
<div style="left:9px;top:588px;width:3px;height:1px;background:rgb(173,173,166)"></div>
<div style="left:9px;top:590px;width:3px;height:1px;background:rgb(160,160,153)"></div>
<div style="left:9px;top:592px;width:3px;height:1px;background:rgb(146,146,140)"></div>
<div style="left:9px;top:594px;width:3px;height:1px;background:rgb(133,133,127)"></div>
<div style="left:9px;top:596px;width:3px;height:1px;background:rgb(120,120,115)"></div>
<div style="left:9px;top:598px;width:3px;height:1px;background:rgb(106,106,101)"></div>
<div style="left:9px;top:600px;width:3px;height:1px;background:rgb(93,93,89)"></div>
<div style="left:9px;top:602px;width:3px;height:1px;background:rgb(80,80,76)"></div>
<div style="left:9px;top:604px;width:3px;height:1px;background:rgb(66,66,63)"></div>
<div style="left:9px;top:606px;width:3px;height:1px;background:rgb(53,53,50)"></div>
<div style="left:9px;top:608px;width:3px;height:1px;background:rgb(39,39,37)"></div>
<div style="left:9px;top:610px;width:3px;height:1px;background:rgb(26,26,24)"></div>
<div style="left:9px;top:612px;width:3px;height:1px;background:rgb(13,13,12)"></div>
<div style="left:9px;top:614px;width:3px;height:1px;background:rgb(0,0,0)"></div>
<div style="left:9px;top:616px;width:3px;height:1px;background:rgb(0,0,0)"></div>
<div style="left:9px;top:618px;width:3px;height:1px;background:rgb(0,0,0)"></div>
<div style="left:9px;top:620px;width:3px;height:1px;background:rgb(0,0,0)"></div>
<div style="left:9px;top:622px;width:3px;height:1px;background:rgb(0,0,0)"></div>
<div style="left:9px;top:624px;width:3px;height:1px;background:rgb(0,0,0)"></div>
<div style="left:9px;top:626px;width:3px;height:1px;background:rgb(0,0,0)"></div>
<div style="left:9px;top:628px;width:3px;height:1px;background:rgb(0,0,0)"></div>
<div style="left:9px;top:630px;width:3px;height:1px;background:rgb(0,0,0)"></div>
<div style="left:9px;top:632px;width:3px;height:1px;background:rgb(0,0,0)"></div>
<div style="left:9px;top:634px;width:3px;height:1px;background:rgb(0,0,0)"></div>
<div style="left:9px;top:636px;width:3px;height:1px;background:rgb(0,0,0)"></div>
<div style="left:9px;top:638px;width:3px;height:1px;background:rgb(0,0,0)"></div>
<div style="left:9px;top:640px;width:3px;height:1px;background:rgb(0,0,0)"></div>
<div style="left:9px;top:642px;width:3px;height:1px;background:rgb(0,0,0)"></div>
<div style="left:9px;top:644px;width:3px;height:1px;background:rgb(0,0,0)"></div>
<div style="left:9px;top:646px;width:3px;height:1px;background:rgb(0,0,0)"></div>
<div style="left:9px;top:648px;width:3px;height:1px;background:rgb(0,0,0)"></div>
<div style="left:9px;top:650px;width:3px;height:1px;background:rgb(0,0,0)"></div>
<div style="left:9px;top:652px;width:3px;height:1px;background:rgb(0,0,0)"></div>
<div style="left:9px;top:654px;width:3px;height:1px;background:rgb(0,0,0)"></div>
<div style="left:9px;top:656px;width:3px;height:1px;background:rgb(0,0,0)"></div>
<div style="left:9px;top:658px;width:3px;height:1px;background:rgb(0,0,0)"></div>
<div style="left:9px;top:660px;width:3px;height:1px;background:rgb(0,0,0)"></div>
<div style="left:9px;top:662px;width:3px;height:1px;background:rgb(0,0,0)"></div>
<div style="left:9px;top:664px;width:3px;height:1px;background:rgb(0,0,0)"></div>
<div style="left:9px;top:666px;width:3px;height:1px;background:rgb(0,0,0)"></div>
<div style="left:9px;top:668px;width:3px;height:1px;background:rgb(0,0,0)"></div>
<div style="left:9px;top:670px;width:3px;height:1px;background:rgb(0,0,0)"></div>
<div style="left:9px;top:672px;width:3px;height:1px;background:rgb(0,0,0)"></div>
<div style="left:325px;top:584px;width:3px;height:1px;background:rgb(200,200,192)"></div>
<div style="left:325px;top:586px;width:3px;height:1px;background:rgb(186,186,178)"></div>
<div style="left:325px;top:588px;width:3px;height:1px;background:rgb(173,173,166)"></div>
<div style="left:325px;top:590px;width:3px;height:1px;background:rgb(160,160,153)"></div>
<div style="left:325px;top:592px;width:3px;height:1px;background:rgb(146,146,140)"></div>
<div style="left:325px;top:594px;width:3px;height:1px;background:rgb(133,133,127)"></div>
<div style="left:325px;top:596px;width:3px;height:1px;background:rgb(120,120,115)"></div>
<div style="left:325px;top:598px;width:3px;height:1px;background:rgb(106,106,101)"></div>
<div style="left:325px;top:600px;width:3px;height:1px;background:rgb(93,93,89)"></div>
<div style="left:325px;top:602px;width:3px;height:1px;background:rgb(80,80,76)"></div>
<div style="left:325px;top:604px;width:3px;height:1px;background:rgb(66,66,63)"></div>
<div style="left:325px;top:606px;width:3px;height:1px;background:rgb(53,53,50)"></div>
<div style="left:325px;top:608px;width:3px;height:1px;background:rgb(39,39,37)"></div>
<div style="left:325px;top:610px;width:3px;height:1px;background:rgb(26,26,24)"></div>
<div style="left:325px;top:612px;width:3px;height:1px;background:rgb(13,13,12)"></div>
<div style="left:325px;top:614px;width:3px;height:1px;background:rgb(0,0,0)"></div>
<div style="left:325px;top:616px;width:3px;height:1px;background:rgb(0,0,0)"></div>
<div style="left:325px;top:618px;width:3px;height:1px;background:rgb(0,0,0)"></div>
<div style="left:325px;top:620px;width:3px;height:1px;background:rgb(0,0,0)"></div>
<div style="left:325px;top:622px;width:3px;height:1px;background:rgb(0,0,0)"></div>
<div style="left:325px;top:624px;width:3px;height:1px;background:rgb(0,0,0)"></div>
<div style="left:325px;top:626px;width:3px;height:1px;background:rgb(0,0,0)"></div>
<div style="left:325px;top:628px;width:3px;height:1px;background:rgb(0,0,0)"></div>
<div style="left:325px;top:630px;width:3px;height:1px;background:rgb(0,0,0)"></div>
<div style="left:325px;top:632px;width:3px;height:1px;background:rgb(0,0,0)"></div>
<div style="left:325px;top:634px;width:3px;height:1px;background:rgb(0,0,0)"></div>
<div style="left:325px;top:636px;width:3px;height:1px;background:rgb(0,0,0)"></div>
<div style="left:325px;top:638px;width:3px;height:1px;background:rgb(0,0,0)"></div>
<div style="left:325px;top:640px;width:3px;height:1px;background:rgb(0,0,0)"></div>
<div style="left:325px;top:642px;width:3px;height:1px;background:rgb(0,0,0)"></div>
<div style="left:325px;top:644px;width:3px;height:1px;background:rgb(0,0,0)"></div>
<div style="left:325px;top:646px;width:3px;height:1px;background:rgb(0,0,0)"></div>
<div style="left:325px;top:648px;width:3px;height:1px;background:rgb(0,0,0)"></div>
<div style="left:325px;top:650px;width:3px;height:1px;background:rgb(0,0,0)"></div>
<div style="left:325px;top:652px;width:3px;height:1px;background:rgb(0,0,0)"></div>
<div style="left:325px;top:654px;width:3px;height:1px;background:rgb(0,0,0)"></div>
<div style="left:325px;top:656px;width:3px;height:1px;background:rgb(0,0,0)"></div>
<div style="left:325px;top:658px;width:3px;height:1px;background:rgb(0,0,0)"></div>
<div style="left:325px;top:660px;width:3px;height:1px;background:rgb(0,0,0)"></div>
<div style="left:325px;top:662px;width:3px;height:1px;background:rgb(0,0,0)"></div>
<div style="left:325px;top:664px;width:3px;height:1px;background:rgb(0,0,0)"></div>
<div style="left:325px;top:666px;width:3px;height:1px;background:rgb(0,0,0)"></div>
<div style="left:325px;top:668px;width:3px;height:1px;background:rgb(0,0,0)"></div>
<div style="left:325px;top:670px;width:3px;height:1px;background:rgb(0,0,0)"></div>
<div style="left:325px;top:672px;width:3px;height:1px;background:rgb(0,0,0)"></div>
<div style="left:321px;top:578px;width:1px;height:100px;background:#e6e4de"></div>
<div style="left:17px;top:587px;width:96px;height:89px;border:1px solid #a09d93"></div>
<div style="left:24.7px;top:587px;width:85px;height:1px;background:#d4d0c8"></div>
<span id="t58" class="t" style="left:25.98px;top:581.03px;font-size:12px;line-height:12px;color:#ff0000;font-weight:bold;letter-spacing:0.368px;">Канал А (В/э)</span>
<div style="left:114px;top:587px;width:96px;height:89px;border:1px solid #a09d93"></div>
<div style="left:122px;top:587px;width:85px;height:1px;background:#d4d0c8"></div>
<span id="t59" class="t" style="left:123.28px;top:581.03px;font-size:12px;line-height:12px;color:#0000ff;font-weight:bold;letter-spacing:0.368px;">Канал В (В/э)</span>
<div style="left:211px;top:587px;width:107px;height:89px;border:1px solid #a09d93"></div>
<div style="left:218.7px;top:587px;width:47px;height:1px;background:#d4d0c8"></div>
<span id="t60" class="t" style="left:219.98px;top:581.03px;font-size:12px;line-height:12px;color:#005000;font-weight:bold;letter-spacing:-0.059px;">Период</span>
<svg style="left:36px;top:595.5px" width="60" height="60" viewBox="-30 -30 60 60"><defs><linearGradient id="g66a" x1="0.15" y1="0.15" x2="0.85" y2="0.85"><stop offset="0" stop-color="#e4e4e4"/><stop offset="0.5" stop-color="#bebebe"/><stop offset="1" stop-color="#888888"/></linearGradient><linearGradient id="g66b" x1="0.15" y1="0.15" x2="0.85" y2="0.85"><stop offset="0" stop-color="#c2bfb8"/><stop offset="0.5" stop-color="#d4d1c9"/><stop offset="1" stop-color="#dddad3"/></linearGradient></defs><line x1="-14.10" y1="14.60" x2="-16.39" y2="16.98" stroke="#94948e" stroke-width="1"/><line x1="-16.21" y1="12.22" x2="-18.85" y2="14.20" stroke="#94948e" stroke-width="1"/><line x1="-17.92" y1="9.53" x2="-20.84" y2="11.08" stroke="#94948e" stroke-width="1"/><line x1="-19.19" y1="6.61" x2="-22.31" y2="7.68" stroke="#94948e" stroke-width="1"/><line x1="-19.99" y1="3.53" x2="-23.24" y2="4.10" stroke="#94948e" stroke-width="1"/><line x1="-20.30" y1="0.35" x2="-23.60" y2="0.41" stroke="#94948e" stroke-width="1"/><line x1="-20.10" y1="-2.83" x2="-23.37" y2="-3.28" stroke="#94948e" stroke-width="1"/><line x1="-19.41" y1="-5.94" x2="-22.57" y2="-6.90" stroke="#94948e" stroke-width="1"/><line x1="-18.25" y1="-8.90" x2="-21.21" y2="-10.35" stroke="#94948e" stroke-width="1"/><line x1="-16.63" y1="-11.64" x2="-19.33" y2="-13.54" stroke="#94948e" stroke-width="1"/><line x1="-14.60" y1="-14.10" x2="-16.98" y2="-16.39" stroke="#94948e" stroke-width="1"/><line x1="-12.22" y1="-16.21" x2="-14.20" y2="-18.85" stroke="#94948e" stroke-width="1"/><line x1="-9.53" y1="-17.92" x2="-11.08" y2="-20.84" stroke="#94948e" stroke-width="1"/><line x1="-6.61" y1="-19.19" x2="-7.68" y2="-22.31" stroke="#94948e" stroke-width="1"/><line x1="-3.53" y1="-19.99" x2="-4.10" y2="-23.24" stroke="#94948e" stroke-width="1"/><line x1="-0.35" y1="-20.30" x2="-0.41" y2="-23.60" stroke="#94948e" stroke-width="1"/><line x1="2.83" y1="-20.10" x2="3.28" y2="-23.37" stroke="#94948e" stroke-width="1"/><line x1="5.94" y1="-19.41" x2="6.90" y2="-22.57" stroke="#94948e" stroke-width="1"/><line x1="8.90" y1="-18.25" x2="10.35" y2="-21.21" stroke="#94948e" stroke-width="1"/><line x1="11.64" y1="-16.63" x2="13.54" y2="-19.33" stroke="#94948e" stroke-width="1"/><line x1="14.10" y1="-14.60" x2="16.39" y2="-16.98" stroke="#94948e" stroke-width="1"/><line x1="16.21" y1="-12.22" x2="18.85" y2="-14.20" stroke="#94948e" stroke-width="1"/><line x1="17.92" y1="-9.53" x2="20.84" y2="-11.08" stroke="#94948e" stroke-width="1"/><line x1="19.19" y1="-6.61" x2="22.31" y2="-7.68" stroke="#94948e" stroke-width="1"/><line x1="19.99" y1="-3.53" x2="23.24" y2="-4.10" stroke="#94948e" stroke-width="1"/><line x1="20.30" y1="-0.35" x2="23.60" y2="-0.41" stroke="#94948e" stroke-width="1"/><line x1="20.10" y1="2.83" x2="23.37" y2="3.28" stroke="#94948e" stroke-width="1"/><line x1="19.41" y1="5.94" x2="22.57" y2="6.90" stroke="#94948e" stroke-width="1"/><line x1="18.25" y1="8.90" x2="21.21" y2="10.35" stroke="#94948e" stroke-width="1"/><line x1="16.63" y1="11.64" x2="19.33" y2="13.54" stroke="#94948e" stroke-width="1"/><line x1="14.60" y1="14.10" x2="16.98" y2="16.39" stroke="#94948e" stroke-width="1"/><circle r="19.3" fill="url(#g66a)"/><circle r="10.7" fill="url(#g66b)"/></svg>
<svg style="left:0;top:0" width="1024" height="702" viewBox="0 0 1024 702"><line x1="49.7" y1="639.2" x2="46.2" y2="642.1" stroke="#000" stroke-width="1"/></svg>
<svg style="left:0;top:0" width="1024" height="702" viewBox="0 0 1024 702"><line x1="44.7" y1="625.5" x2="40.2" y2="625.5" stroke="#000" stroke-width="1"/></svg>
<svg style="left:0;top:0" width="1024" height="702" viewBox="0 0 1024 702"><line x1="50.7" y1="610.7" x2="47.4" y2="607.6" stroke="#000" stroke-width="1"/></svg>
<svg style="left:0;top:0" width="1024" height="702" viewBox="0 0 1024 702"><line x1="63.4" y1="604.4" x2="62.9" y2="599.9" stroke="#000" stroke-width="1"/></svg>
<svg style="left:0;top:0" width="1024" height="702" viewBox="0 0 1024 702"><line x1="79.7" y1="609.2" x2="82.6" y2="605.7" stroke="#000" stroke-width="1"/></svg>
<svg style="left:0;top:0" width="1024" height="702" viewBox="0 0 1024 702"><line x1="87.1" y1="622.5" x2="91.5" y2="621.9" stroke="#000" stroke-width="1"/></svg>
<svg style="left:0;top:0" width="1024" height="702" viewBox="0 0 1024 702"><line x1="82.3" y1="639.2" x2="85.8" y2="642.1" stroke="#000" stroke-width="1"/></svg>
<span id="t61" class="t" style="left:62.03px;top:593.26px;font-size:9.5px;line-height:9.5px;color:#000;letter-spacing:0.107px;">5В</span>
<span id="t62" class="t" style="left:82.13px;top:599.76px;font-size:9.5px;line-height:9.5px;color:#000;letter-spacing:-0.355px;">10В</span>
<span id="t63" class="t" style="left:36.63px;top:604.06px;font-size:9.5px;line-height:9.5px;color:#000;letter-spacing:-0.842px;">1В</span>
<span id="t64" class="t" style="left:91.63px;top:615.96px;font-size:9.5px;line-height:9.5px;color:#000;letter-spacing:-0.255px;">15В</span>
<span id="t65" class="t" style="left:20.13px;top:621.96px;font-size:9.5px;line-height:9.5px;color:#000;letter-spacing:0.098px;">0.5В</span>
<span id="t66" class="t" style="left:24.23px;top:636.96px;font-size:9.5px;line-height:9.5px;color:#000;letter-spacing:0.023px;">0.1В</span>
<span id="t67" class="t" style="left:87.43px;top:636.96px;font-size:9.5px;line-height:9.5px;color:#000;letter-spacing:-0.122px;">20В</span>
<span id="t68" class="t" style="left:55.83px;top:620.06px;font-size:9.5px;line-height:9.5px;color:#ff0000;letter-spacing:0.098px;">0,4В</span>
<svg style="left:48px;top:623px" width="9" height="9" viewBox="0 0 9 9"><polygon points="1.2,5.5 7,2.5 7,8.2" fill="#ff0000"/></svg>
<svg style="left:133.5px;top:595.5px" width="60" height="60" viewBox="-30 -30 60 60"><defs><linearGradient id="g163a" x1="0.15" y1="0.15" x2="0.85" y2="0.85"><stop offset="0" stop-color="#e4e4e4"/><stop offset="0.5" stop-color="#bebebe"/><stop offset="1" stop-color="#888888"/></linearGradient><linearGradient id="g163b" x1="0.15" y1="0.15" x2="0.85" y2="0.85"><stop offset="0" stop-color="#c2bfb8"/><stop offset="0.5" stop-color="#d4d1c9"/><stop offset="1" stop-color="#dddad3"/></linearGradient></defs><line x1="-14.10" y1="14.60" x2="-16.39" y2="16.98" stroke="#94948e" stroke-width="1"/><line x1="-16.21" y1="12.22" x2="-18.85" y2="14.20" stroke="#94948e" stroke-width="1"/><line x1="-17.92" y1="9.53" x2="-20.84" y2="11.08" stroke="#94948e" stroke-width="1"/><line x1="-19.19" y1="6.61" x2="-22.31" y2="7.68" stroke="#94948e" stroke-width="1"/><line x1="-19.99" y1="3.53" x2="-23.24" y2="4.10" stroke="#94948e" stroke-width="1"/><line x1="-20.30" y1="0.35" x2="-23.60" y2="0.41" stroke="#94948e" stroke-width="1"/><line x1="-20.10" y1="-2.83" x2="-23.37" y2="-3.28" stroke="#94948e" stroke-width="1"/><line x1="-19.41" y1="-5.94" x2="-22.57" y2="-6.90" stroke="#94948e" stroke-width="1"/><line x1="-18.25" y1="-8.90" x2="-21.21" y2="-10.35" stroke="#94948e" stroke-width="1"/><line x1="-16.63" y1="-11.64" x2="-19.33" y2="-13.54" stroke="#94948e" stroke-width="1"/><line x1="-14.60" y1="-14.10" x2="-16.98" y2="-16.39" stroke="#94948e" stroke-width="1"/><line x1="-12.22" y1="-16.21" x2="-14.20" y2="-18.85" stroke="#94948e" stroke-width="1"/><line x1="-9.53" y1="-17.92" x2="-11.08" y2="-20.84" stroke="#94948e" stroke-width="1"/><line x1="-6.61" y1="-19.19" x2="-7.68" y2="-22.31" stroke="#94948e" stroke-width="1"/><line x1="-3.53" y1="-19.99" x2="-4.10" y2="-23.24" stroke="#94948e" stroke-width="1"/><line x1="-0.35" y1="-20.30" x2="-0.41" y2="-23.60" stroke="#94948e" stroke-width="1"/><line x1="2.83" y1="-20.10" x2="3.28" y2="-23.37" stroke="#94948e" stroke-width="1"/><line x1="5.94" y1="-19.41" x2="6.90" y2="-22.57" stroke="#94948e" stroke-width="1"/><line x1="8.90" y1="-18.25" x2="10.35" y2="-21.21" stroke="#94948e" stroke-width="1"/><line x1="11.64" y1="-16.63" x2="13.54" y2="-19.33" stroke="#94948e" stroke-width="1"/><line x1="14.10" y1="-14.60" x2="16.39" y2="-16.98" stroke="#94948e" stroke-width="1"/><line x1="16.21" y1="-12.22" x2="18.85" y2="-14.20" stroke="#94948e" stroke-width="1"/><line x1="17.92" y1="-9.53" x2="20.84" y2="-11.08" stroke="#94948e" stroke-width="1"/><line x1="19.19" y1="-6.61" x2="22.31" y2="-7.68" stroke="#94948e" stroke-width="1"/><line x1="19.99" y1="-3.53" x2="23.24" y2="-4.10" stroke="#94948e" stroke-width="1"/><line x1="20.30" y1="-0.35" x2="23.60" y2="-0.41" stroke="#94948e" stroke-width="1"/><line x1="20.10" y1="2.83" x2="23.37" y2="3.28" stroke="#94948e" stroke-width="1"/><line x1="19.41" y1="5.94" x2="22.57" y2="6.90" stroke="#94948e" stroke-width="1"/><line x1="18.25" y1="8.90" x2="21.21" y2="10.35" stroke="#94948e" stroke-width="1"/><line x1="16.63" y1="11.64" x2="19.33" y2="13.54" stroke="#94948e" stroke-width="1"/><line x1="14.60" y1="14.10" x2="16.98" y2="16.39" stroke="#94948e" stroke-width="1"/><circle r="19.3" fill="url(#g163a)"/><circle r="10.7" fill="url(#g163b)"/></svg>
<svg style="left:0;top:0" width="1024" height="702" viewBox="0 0 1024 702"><line x1="147.2" y1="639.2" x2="143.7" y2="642.1" stroke="#000" stroke-width="1"/></svg>
<svg style="left:0;top:0" width="1024" height="702" viewBox="0 0 1024 702"><line x1="142.2" y1="625.5" x2="137.7" y2="625.5" stroke="#000" stroke-width="1"/></svg>
<svg style="left:0;top:0" width="1024" height="702" viewBox="0 0 1024 702"><line x1="148.2" y1="610.7" x2="144.9" y2="607.6" stroke="#000" stroke-width="1"/></svg>
<svg style="left:0;top:0" width="1024" height="702" viewBox="0 0 1024 702"><line x1="160.9" y1="604.4" x2="160.4" y2="599.9" stroke="#000" stroke-width="1"/></svg>
<svg style="left:0;top:0" width="1024" height="702" viewBox="0 0 1024 702"><line x1="177.2" y1="609.2" x2="180.1" y2="605.7" stroke="#000" stroke-width="1"/></svg>
<svg style="left:0;top:0" width="1024" height="702" viewBox="0 0 1024 702"><line x1="184.6" y1="622.5" x2="189.0" y2="621.9" stroke="#000" stroke-width="1"/></svg>
<svg style="left:0;top:0" width="1024" height="702" viewBox="0 0 1024 702"><line x1="179.8" y1="639.2" x2="183.3" y2="642.1" stroke="#000" stroke-width="1"/></svg>
<span id="t69" class="t" style="left:159.53px;top:593.26px;font-size:9.5px;line-height:9.5px;color:#000;letter-spacing:0.107px;">5В</span>
<span id="t70" class="t" style="left:179.63px;top:599.76px;font-size:9.5px;line-height:9.5px;color:#000;letter-spacing:-0.355px;">10В</span>
<span id="t71" class="t" style="left:134.13px;top:604.06px;font-size:9.5px;line-height:9.5px;color:#000;letter-spacing:-0.842px;">1В</span>
<span id="t72" class="t" style="left:189.13px;top:615.96px;font-size:9.5px;line-height:9.5px;color:#000;letter-spacing:-0.255px;">15В</span>
<span id="t73" class="t" style="left:117.63px;top:621.96px;font-size:9.5px;line-height:9.5px;color:#000;letter-spacing:0.098px;">0.5В</span>
<span id="t74" class="t" style="left:121.73px;top:636.96px;font-size:9.5px;line-height:9.5px;color:#000;letter-spacing:0.023px;">0.1В</span>
<span id="t75" class="t" style="left:184.93px;top:636.96px;font-size:9.5px;line-height:9.5px;color:#000;letter-spacing:-0.122px;">20В</span>
<span id="t76" class="t" style="left:153.43px;top:620.06px;font-size:9.5px;line-height:9.5px;color:#0000ff;letter-spacing:0.098px;">0,6В</span>
<svg style="left:145px;top:619px" width="9" height="9" viewBox="0 0 9 9"><polygon points="1,4.5 7.5,1.5 7.5,7.5" fill="#0000ff"/></svg>
<svg style="left:230.5px;top:597.3px" width="60" height="60" viewBox="-30 -30 60 60"><defs><linearGradient id="g260a" x1="0.15" y1="0.15" x2="0.85" y2="0.85"><stop offset="0" stop-color="#e4e4e4"/><stop offset="0.5" stop-color="#bebebe"/><stop offset="1" stop-color="#888888"/></linearGradient><linearGradient id="g260b" x1="0.15" y1="0.15" x2="0.85" y2="0.85"><stop offset="0" stop-color="#c2bfb8"/><stop offset="0.5" stop-color="#d4d1c9"/><stop offset="1" stop-color="#dddad3"/></linearGradient></defs><line x1="-16.12" y1="16.69" x2="-18.41" y2="19.06" stroke="#7c7c7c" stroke-width="1"/><line x1="-17.24" y1="15.52" x2="-19.69" y2="17.73" stroke="#7c7c7c" stroke-width="1"/><line x1="-18.28" y1="14.28" x2="-20.88" y2="16.32" stroke="#7c7c7c" stroke-width="1"/><line x1="-19.23" y1="12.97" x2="-21.97" y2="14.82" stroke="#7c7c7c" stroke-width="1"/><line x1="-20.09" y1="11.60" x2="-22.95" y2="13.25" stroke="#7c7c7c" stroke-width="1"/><line x1="-20.85" y1="10.17" x2="-23.82" y2="11.62" stroke="#7c7c7c" stroke-width="1"/><line x1="-21.51" y1="8.69" x2="-24.57" y2="9.93" stroke="#7c7c7c" stroke-width="1"/><line x1="-22.06" y1="7.17" x2="-25.20" y2="8.19" stroke="#7c7c7c" stroke-width="1"/><line x1="-22.51" y1="5.61" x2="-25.71" y2="6.41" stroke="#7c7c7c" stroke-width="1"/><line x1="-22.85" y1="4.03" x2="-26.10" y2="4.60" stroke="#7c7c7c" stroke-width="1"/><line x1="-23.07" y1="2.43" x2="-26.35" y2="2.77" stroke="#7c7c7c" stroke-width="1"/><line x1="-23.19" y1="0.81" x2="-26.48" y2="0.92" stroke="#7c7c7c" stroke-width="1"/><line x1="-23.19" y1="-0.81" x2="-26.48" y2="-0.92" stroke="#7c7c7c" stroke-width="1"/><line x1="-23.07" y1="-2.43" x2="-26.35" y2="-2.77" stroke="#7c7c7c" stroke-width="1"/><line x1="-22.85" y1="-4.03" x2="-26.10" y2="-4.60" stroke="#7c7c7c" stroke-width="1"/><line x1="-22.51" y1="-5.61" x2="-25.71" y2="-6.41" stroke="#7c7c7c" stroke-width="1"/><line x1="-22.06" y1="-7.17" x2="-25.20" y2="-8.19" stroke="#7c7c7c" stroke-width="1"/><line x1="-21.51" y1="-8.69" x2="-24.57" y2="-9.93" stroke="#7c7c7c" stroke-width="1"/><line x1="-20.85" y1="-10.17" x2="-23.82" y2="-11.62" stroke="#7c7c7c" stroke-width="1"/><line x1="-20.09" y1="-11.60" x2="-22.95" y2="-13.25" stroke="#7c7c7c" stroke-width="1"/><line x1="-19.23" y1="-12.97" x2="-21.97" y2="-14.82" stroke="#7c7c7c" stroke-width="1"/><line x1="-18.28" y1="-14.28" x2="-20.88" y2="-16.32" stroke="#7c7c7c" stroke-width="1"/><line x1="-17.24" y1="-15.52" x2="-19.69" y2="-17.73" stroke="#7c7c7c" stroke-width="1"/><line x1="-16.12" y1="-16.69" x2="-18.41" y2="-19.06" stroke="#7c7c7c" stroke-width="1"/><line x1="-14.91" y1="-17.77" x2="-17.03" y2="-20.30" stroke="#7c7c7c" stroke-width="1"/><line x1="-13.64" y1="-18.77" x2="-15.58" y2="-21.44" stroke="#7c7c7c" stroke-width="1"/><line x1="-12.29" y1="-19.67" x2="-14.04" y2="-22.47" stroke="#7c7c7c" stroke-width="1"/><line x1="-10.89" y1="-20.48" x2="-12.44" y2="-23.40" stroke="#7c7c7c" stroke-width="1"/><line x1="-9.44" y1="-21.19" x2="-10.78" y2="-24.21" stroke="#7c7c7c" stroke-width="1"/><line x1="-7.93" y1="-21.80" x2="-9.06" y2="-24.90" stroke="#7c7c7c" stroke-width="1"/><line x1="-6.39" y1="-22.30" x2="-7.30" y2="-25.47" stroke="#7c7c7c" stroke-width="1"/><line x1="-4.82" y1="-22.69" x2="-5.51" y2="-25.92" stroke="#7c7c7c" stroke-width="1"/><line x1="-3.23" y1="-22.97" x2="-3.69" y2="-26.24" stroke="#7c7c7c" stroke-width="1"/><line x1="-1.62" y1="-23.14" x2="-1.85" y2="-26.44" stroke="#7c7c7c" stroke-width="1"/><line x1="0.00" y1="-23.20" x2="0.00" y2="-26.50" stroke="#7c7c7c" stroke-width="1"/><line x1="1.62" y1="-23.14" x2="1.85" y2="-26.44" stroke="#7c7c7c" stroke-width="1"/><line x1="3.23" y1="-22.97" x2="3.69" y2="-26.24" stroke="#7c7c7c" stroke-width="1"/><line x1="4.82" y1="-22.69" x2="5.51" y2="-25.92" stroke="#7c7c7c" stroke-width="1"/><line x1="6.39" y1="-22.30" x2="7.30" y2="-25.47" stroke="#7c7c7c" stroke-width="1"/><line x1="7.93" y1="-21.80" x2="9.06" y2="-24.90" stroke="#7c7c7c" stroke-width="1"/><line x1="9.44" y1="-21.19" x2="10.78" y2="-24.21" stroke="#7c7c7c" stroke-width="1"/><line x1="10.89" y1="-20.48" x2="12.44" y2="-23.40" stroke="#7c7c7c" stroke-width="1"/><line x1="12.29" y1="-19.67" x2="14.04" y2="-22.47" stroke="#7c7c7c" stroke-width="1"/><line x1="13.64" y1="-18.77" x2="15.58" y2="-21.44" stroke="#7c7c7c" stroke-width="1"/><line x1="14.91" y1="-17.77" x2="17.03" y2="-20.30" stroke="#7c7c7c" stroke-width="1"/><line x1="16.12" y1="-16.69" x2="18.41" y2="-19.06" stroke="#7c7c7c" stroke-width="1"/><line x1="17.24" y1="-15.52" x2="19.69" y2="-17.73" stroke="#7c7c7c" stroke-width="1"/><line x1="18.28" y1="-14.28" x2="20.88" y2="-16.32" stroke="#7c7c7c" stroke-width="1"/><line x1="19.23" y1="-12.97" x2="21.97" y2="-14.82" stroke="#7c7c7c" stroke-width="1"/><line x1="20.09" y1="-11.60" x2="22.95" y2="-13.25" stroke="#7c7c7c" stroke-width="1"/><line x1="20.85" y1="-10.17" x2="23.82" y2="-11.62" stroke="#7c7c7c" stroke-width="1"/><line x1="21.51" y1="-8.69" x2="24.57" y2="-9.93" stroke="#7c7c7c" stroke-width="1"/><line x1="22.06" y1="-7.17" x2="25.20" y2="-8.19" stroke="#7c7c7c" stroke-width="1"/><line x1="22.51" y1="-5.61" x2="25.71" y2="-6.41" stroke="#7c7c7c" stroke-width="1"/><line x1="22.85" y1="-4.03" x2="26.10" y2="-4.60" stroke="#7c7c7c" stroke-width="1"/><line x1="23.07" y1="-2.43" x2="26.35" y2="-2.77" stroke="#7c7c7c" stroke-width="1"/><line x1="23.19" y1="-0.81" x2="26.48" y2="-0.92" stroke="#7c7c7c" stroke-width="1"/><line x1="23.19" y1="0.81" x2="26.48" y2="0.92" stroke="#7c7c7c" stroke-width="1"/><line x1="23.07" y1="2.43" x2="26.35" y2="2.77" stroke="#7c7c7c" stroke-width="1"/><line x1="22.85" y1="4.03" x2="26.10" y2="4.60" stroke="#7c7c7c" stroke-width="1"/><line x1="22.51" y1="5.61" x2="25.71" y2="6.41" stroke="#7c7c7c" stroke-width="1"/><line x1="22.06" y1="7.17" x2="25.20" y2="8.19" stroke="#7c7c7c" stroke-width="1"/><line x1="21.51" y1="8.69" x2="24.57" y2="9.93" stroke="#7c7c7c" stroke-width="1"/><line x1="20.85" y1="10.17" x2="23.82" y2="11.62" stroke="#7c7c7c" stroke-width="1"/><line x1="20.09" y1="11.60" x2="22.95" y2="13.25" stroke="#7c7c7c" stroke-width="1"/><line x1="19.23" y1="12.97" x2="21.97" y2="14.82" stroke="#7c7c7c" stroke-width="1"/><line x1="18.28" y1="14.28" x2="20.88" y2="16.32" stroke="#7c7c7c" stroke-width="1"/><line x1="17.24" y1="15.52" x2="19.69" y2="17.73" stroke="#7c7c7c" stroke-width="1"/><line x1="16.12" y1="16.69" x2="18.41" y2="19.06" stroke="#7c7c7c" stroke-width="1"/><circle r="22.2" fill="url(#g260a)"/><circle r="22.2" fill="none" stroke="#008000" stroke-width="1"/><circle r="13" fill="url(#g260b)"/></svg>
<svg style="left:0;top:0" width="1024" height="702" viewBox="0 0 1024 702"><line x1="241.4" y1="642.2" x2="237.9" y2="645.0" stroke="#000" stroke-width="1"/></svg>
<svg style="left:0;top:0" width="1024" height="702" viewBox="0 0 1024 702"><line x1="236.3" y1="627.3" x2="231.8" y2="627.3" stroke="#000" stroke-width="1"/></svg>
<svg style="left:0;top:0" width="1024" height="702" viewBox="0 0 1024 702"><line x1="241.4" y1="612.4" x2="237.9" y2="609.6" stroke="#000" stroke-width="1"/></svg>
<svg style="left:0;top:0" width="1024" height="702" viewBox="0 0 1024 702"><line x1="255.9" y1="603.5" x2="255.0" y2="599.1" stroke="#000" stroke-width="1"/></svg>
<svg style="left:0;top:0" width="1024" height="702" viewBox="0 0 1024 702"><line x1="272.6" y1="606.3" x2="274.9" y2="602.4" stroke="#000" stroke-width="1"/></svg>
<svg style="left:0;top:0" width="1024" height="702" viewBox="0 0 1024 702"><line x1="282.9" y1="618.2" x2="287.1" y2="616.5" stroke="#000" stroke-width="1"/></svg>
<svg style="left:0;top:0" width="1024" height="702" viewBox="0 0 1024 702"><line x1="283.5" y1="634.8" x2="287.8" y2="636.2" stroke="#000" stroke-width="1"/></svg>
<svg style="left:0;top:0" width="1024" height="702" viewBox="0 0 1024 702"><line x1="279.3" y1="642.5" x2="282.8" y2="645.4" stroke="#000" stroke-width="1"/></svg>
<span id="t77" class="t" style="left:238.93px;top:593.56px;font-size:9.5px;line-height:9.5px;color:#000;letter-spacing:-0.305px;">10мс</span>
<span id="t78" class="t" style="left:274.63px;top:598.06px;font-size:9.5px;line-height:9.5px;color:#000;letter-spacing:-0.579px;">1мс</span>
<span id="t79" class="t" style="left:220.13px;top:605.26px;font-size:9.5px;line-height:9.5px;color:#000;letter-spacing:0.093px;">0,1с</span>
<span id="t80" class="t" style="left:286.73px;top:612.36px;font-size:9.5px;line-height:9.5px;color:#000;letter-spacing:0.128px;">0,1мс</span>
<span id="t81" class="t" style="left:222.03px;top:622.06px;font-size:9.5px;line-height:9.5px;color:#000;letter-spacing:-0.303px;">1с</span>
<span id="t82" class="t" style="left:287.03px;top:629.16px;font-size:9.5px;line-height:9.5px;color:#000;letter-spacing:-0.257px;">10мкс</span>
<span id="t83" class="t" style="left:225.63px;top:641.16px;font-size:9.5px;line-height:9.5px;color:#000;letter-spacing:-0.563px;">10с</span>
<span id="t84" class="t" style="left:281.53px;top:641.16px;font-size:9.5px;line-height:9.5px;color:#000;letter-spacing:-0.222px;">5мкс</span>
<span id="t85" class="t" style="left:248.33px;top:621.76px;font-size:9.5px;line-height:9.5px;color:#005000;letter-spacing:0.028px;">0,2мс</span>
<svg style="left:271px;top:616px" width="9" height="9" viewBox="0 0 9 9"><polygon points="1,2 7,3.5 4,8" fill="#006000"/></svg>
<span id="t86" class="t" style="left:299.14px;top:591.36px;font-size:11px;line-height:11px;color:#008000;letter-spacing:-0.174px;">En</span>
<div style="left:21px;top:651px;width:87px;height:20px;border:2px solid #7a7a7a;border-radius:4px;background:linear-gradient(#f8dcc4,#f2c29c 20%,#f8dcc8 55%,#fdf4ee 85%,#fff)"></div>
<span id="t87" class="t" style="left:42.24px;top:656.56px;font-size:11px;line-height:11px;color:#ff0000;letter-spacing:0.156px;">Включен</span>
<div style="left:118px;top:651px;width:87px;height:20px;border:1px solid #8a8a84;border-radius:4px;background:linear-gradient(#dddbd5,#e9e8e4 35%,#f1f0ed 75%,#f7f6f4)"></div>
<span id="t88" class="t" style="left:134.04px;top:655.56px;font-size:11px;line-height:11px;color:#000;letter-spacing:0.161px;">Выключен</span>
<div style="left:213.4px;top:651px;width:18px;height:20px;border:1px solid #94928a;border-radius:3px;background:#d4d0c8"><svg style="left:-1px;top:-1px" width="18" height="20" viewBox="0 0 18 20"><defs><linearGradient id="zga" x1="0" y1="0" x2="1" y2="1"><stop offset="0" stop-color="#b4d0f8"/><stop offset="1" stop-color="#eef4ff"/></linearGradient></defs><line x1="11.6" y1="12.6" x2="15.6" y2="16.8" stroke="#806020" stroke-width="3.2" stroke-linecap="round"/><line x1="11.8" y1="12.8" x2="15.4" y2="16.6" stroke="#f0b040" stroke-width="2" stroke-linecap="round"/><circle cx="7.4" cy="7.6" r="5.8" fill="url(#zga)" stroke="#8084c4" stroke-width="1.3"/><rect x="4" y="6.6" width="7" height="2" fill="#2030a8"/><rect x="6.5" y="4.1" width="2" height="7" fill="#2030a8"/></svg></div>
<div style="left:232.7px;top:651px;width:18px;height:20px;border:1px solid #94928a;border-radius:3px;background:#d4d0c8"><svg style="left:-1px;top:-1px" width="18" height="20" viewBox="0 0 18 20"><defs><linearGradient id="zgb" x1="0" y1="0" x2="1" y2="1"><stop offset="0" stop-color="#b4d0f8"/><stop offset="1" stop-color="#eef4ff"/></linearGradient></defs><line x1="11.6" y1="12.6" x2="15.6" y2="16.8" stroke="#806020" stroke-width="3.2" stroke-linecap="round"/><line x1="11.8" y1="12.8" x2="15.4" y2="16.6" stroke="#f0b040" stroke-width="2" stroke-linecap="round"/><circle cx="7.4" cy="7.6" r="5.8" fill="url(#zgb)" stroke="#8084c4" stroke-width="1.3"/><rect x="4" y="6.6" width="7" height="2" fill="#2030a8"/></svg></div>
<div style="left:251.8px;top:651px;width:18px;height:20px;border:1px solid #94928a;border-radius:3px;background:#d4d0c8"><svg style="left:-1px;top:-1px" width="18" height="20" viewBox="0 0 18 20"><defs><linearGradient id="zgp" x1="0" y1="0" x2="1" y2="1"><stop offset="0" stop-color="#ffffff"/><stop offset="1" stop-color="#d8d8e0"/></linearGradient></defs><polygon points="3.5,2.5 10.5,2.5 15,7 15,17.5 3.5,17.5" fill="url(#zgp)" stroke="#c4c4d0" stroke-width="1"/><polygon points="10.5,2.5 10.5,7 15,7" fill="#e4e4ec" stroke="#c0c0cc" stroke-width="0.8"/></svg></div>
<div style="left:272px;top:653px;width:43px;height:16px;background:#fff"></div>
<div style="left:303px;top:655px;width:10px;height:12px;background:#d4d0c8"><svg style="left:3px;top:5px" width="5" height="3" viewBox="0 0 5 3" shape-rendering="crispEdges"><rect x="0" y="0" width="5" height="1"/><rect x="1" y="1" width="3" height="1"/><rect x="2" y="2" width="1" height="1"/></svg></div>
<span id="t89" class="t" style="left:274.90px;top:656.70px;font-size:10px;line-height:10px;color:#000;letter-spacing:-0.235px;">1:1</span>
<div style="left:333px;top:585px;width:102px;height:90px;border-top:1px solid #808080;border-left:1px solid #808080;border-right:1px solid #fff;border-bottom:1px solid #fff"></div>
<div style="left:334px;top:586px;width:100px;height:88px;border-top:1px solid #000;border-left:1px solid #000;border-right:1px solid #d4d0c8;border-bottom:1px solid #d4d0c8"></div>
<div style="left:335px;top:587px;width:16px;height:14px;border-top:1px solid #fff;border-left:1px solid #fff;border-right:1px solid #000;border-bottom:1px solid #000;background:#d4d0c8"></div>
<div style="left:351px;top:587px;width:66px;height:14px;border-top:1px solid #fff;border-left:1px solid #fff;border-right:1px solid #000;border-bottom:1px solid #000;background:#d4d0c8"></div>
<span id="t90" class="t" style="left:336.20px;top:589.70px;font-size:10px;line-height:10px;color:#000;">№</span>
<span id="t91" class="t" style="left:369.70px;top:589.70px;font-size:10px;line-height:10px;color:#000;letter-spacing:-0.379px;">Время</span>
<div style="left:335px;top:614px;width:82px;height:1px;background:#c0c3c8"></div>
<div style="left:335px;top:628px;width:82px;height:1px;background:#c0c3c8"></div>
<div style="left:335px;top:642px;width:82px;height:1px;background:#c0c3c8"></div>
<div style="left:335px;top:656px;width:82px;height:1px;background:#c0c3c8"></div>
<div style="left:335px;top:670px;width:82px;height:1px;background:#c0c3c8"></div>
<div style="left:350px;top:601px;width:1px;height:73px;background:#c0c3c8"></div>
<div style="left:416px;top:601px;width:1px;height:73px;background:#c0c3c8"></div>
<span id="t92" class="t" style="left:337.30px;top:603.70px;font-size:10px;line-height:10px;color:#000;">1</span>
<span id="t93" class="t" style="left:337.30px;top:617.70px;font-size:10px;line-height:10px;color:#000;">2</span>
<span id="t94" class="t" style="left:337.30px;top:631.70px;font-size:10px;line-height:10px;color:#000;">3</span>
<span id="t95" class="t" style="left:337.30px;top:645.70px;font-size:10px;line-height:10px;color:#000;">4</span>
<span id="t96" class="t" style="left:337.30px;top:659.70px;font-size:10px;line-height:10px;color:#000;">5</span>
<div class="dith" style="left:417px;top:587px;width:16px;height:87px"></div>
<div style="left:417px;top:587px;width:16px;height:16px;background:#d4d0c8;border-top:1px solid #d4d0c8;border-left:1px solid #d4d0c8;border-right:1px solid #404040;border-bottom:1px solid #404040"><div style="left:0;top:0;width:14px;height:14px;border-top:1px solid #fff;border-left:1px solid #fff;border-right:1px solid #808080;border-bottom:1px solid #808080"></div><svg style="left:2px;top:2px" width="9" height="9" viewBox="0 0 9 9"><polygon points="1,6.5 8,6.5 4.5,2.5" fill="#000"/></svg></div>
<div style="left:417px;top:603px;width:16px;height:16px;background:#d4d0c8;border-top:1px solid #d4d0c8;border-left:1px solid #d4d0c8;border-right:1px solid #404040;border-bottom:1px solid #404040"><div style="left:0;top:0;width:14px;height:14px;border-top:1px solid #fff;border-left:1px solid #fff;border-right:1px solid #808080;border-bottom:1px solid #808080"></div></div>
<div style="left:417px;top:657px;width:16px;height:16px;background:#d4d0c8;border-top:1px solid #d4d0c8;border-left:1px solid #d4d0c8;border-right:1px solid #404040;border-bottom:1px solid #404040"><div style="left:0;top:0;width:14px;height:14px;border-top:1px solid #fff;border-left:1px solid #fff;border-right:1px solid #808080;border-bottom:1px solid #808080"></div><svg style="left:2px;top:2px" width="9" height="9" viewBox="0 0 9 9"><polygon points="1,2.5 8,2.5 4.5,6.5" fill="#000"/></svg></div>
<div style="left:435px;top:587px;width:353px;height:42px;border:1px solid #a09d93"></div>
<div style="left:442.8px;top:587px;width:220px;height:1px;background:#d4d0c8"></div>
<span id="t97" class="t" style="left:444.08px;top:581.03px;font-size:12px;line-height:12px;color:#000;font-weight:bold;letter-spacing:0.139px;">Параметры сигнала под маркерами</span>
<div style="left:435px;top:637px;width:173px;height:39px;border:1px solid #a09d93"></div>
<div style="left:442.8px;top:637px;width:164px;height:1px;background:#d4d0c8"></div>
<span id="t98" class="t" style="left:444.08px;top:631.03px;font-size:12px;line-height:12px;color:#000;font-weight:bold;letter-spacing:-0.009px;">Общие параметры сигнала</span>
<div style="left:613px;top:637px;width:176px;height:39px;border:1px solid #a09d93"></div>
<div style="left:620.5px;top:637px;width:75.5px;height:1px;background:#d4d0c8"></div>
<span id="t99" class="t" style="left:621.78px;top:631.03px;font-size:12px;line-height:12px;color:#000;font-weight:bold;letter-spacing:0.202px;">Управление</span>
<span id="t100" class="t" style="left:442.64px;top:593.56px;font-size:11px;line-height:11px;color:#800080;letter-spacing:0.155px;">T1 =00:00:03:271</span>
<span id="t101" class="t" style="left:556.64px;top:593.56px;font-size:11px;line-height:11px;color:#008000;letter-spacing:0.167px;">T2 =00:00:03:471</span>
<span id="t102" class="t" style="left:670.44px;top:593.56px;font-size:11px;line-height:11px;color:#008000;letter-spacing:-0.011px;">T2 -</span>
<span id="t103" class="t" style="left:694.64px;top:593.56px;font-size:11px;line-height:11px;color:#800080;letter-spacing:0.223px;">T1 =</span>
<span id="t104" class="t" style="left:721.24px;top:593.56px;font-size:11px;line-height:11px;color:#008000;letter-spacing:0.215px;">00:00:00:200</span>
<div style="left:786.3px;top:590px;width:1.7px;height:16px;background:#d4d0c8"></div>
<div style="left:787px;top:587px;width:1px;height:42px;background:#a09d93"></div>
<span id="t105" class="t" style="left:438.24px;top:603.56px;font-size:11px;line-height:11px;color:#800080;">U</span>
<span id="t106" class="t" style="left:445.40px;top:606.80px;font-size:10px;line-height:10px;color:#ff0000;">A</span>
<span id="t107" class="t" style="left:452.44px;top:603.56px;font-size:11px;line-height:11px;color:#800080;letter-spacing:0.123px;">1=-0,01 B</span>
<span id="t108" class="t" style="left:552.44px;top:603.56px;font-size:11px;line-height:11px;color:#008000;">U</span>
<span id="t109" class="t" style="left:559.60px;top:606.80px;font-size:10px;line-height:10px;color:#ff0000;">A</span>
<span id="t110" class="t" style="left:566.64px;top:603.56px;font-size:11px;line-height:11px;color:#008000;letter-spacing:0.123px;">2=-0,01 B</span>
<span id="t111" class="t" style="left:666.14px;top:603.56px;font-size:11px;line-height:11px;color:#008000;">U</span>
<span id="t112" class="t" style="left:673.30px;top:606.80px;font-size:10px;line-height:10px;color:#ff0000;">A</span>
<span id="t113" class="t" style="left:680.14px;top:603.56px;font-size:11px;line-height:11px;color:#008000;letter-spacing:0.019px;">2-</span>
<span id="t114" class="t" style="left:689.94px;top:603.56px;font-size:11px;line-height:11px;color:#800080;">U</span>
<span id="t115" class="t" style="left:697.10px;top:606.80px;font-size:10px;line-height:10px;color:#ff0000;">A</span>
<span id="t116" class="t" style="left:704.24px;top:603.56px;font-size:11px;line-height:11px;color:#800080;letter-spacing:0.537px;">1=</span>
<span id="t117" class="t" style="left:438.24px;top:613.56px;font-size:11px;line-height:11px;color:#800080;">U</span>
<span id="t118" class="t" style="left:445.40px;top:616.80px;font-size:10px;line-height:10px;color:#0000ff;">B</span>
<span id="t119" class="t" style="left:452.44px;top:613.56px;font-size:11px;line-height:11px;color:#800080;letter-spacing:0.387px;">1=</span>
<span id="t120" class="t" style="left:552.44px;top:613.56px;font-size:11px;line-height:11px;color:#008000;">U</span>
<span id="t121" class="t" style="left:559.60px;top:616.80px;font-size:10px;line-height:10px;color:#0000ff;">B</span>
<span id="t122" class="t" style="left:566.64px;top:613.56px;font-size:11px;line-height:11px;color:#008000;letter-spacing:0.387px;">2=</span>
<span id="t123" class="t" style="left:666.14px;top:613.56px;font-size:11px;line-height:11px;color:#008000;">U</span>
<span id="t124" class="t" style="left:673.30px;top:616.80px;font-size:10px;line-height:10px;color:#0000ff;">B</span>
<span id="t125" class="t" style="left:680.14px;top:613.56px;font-size:11px;line-height:11px;color:#008000;letter-spacing:0.019px;">2-</span>
<span id="t126" class="t" style="left:689.94px;top:613.56px;font-size:11px;line-height:11px;color:#800080;">U</span>
<span id="t127" class="t" style="left:697.10px;top:616.80px;font-size:10px;line-height:10px;color:#0000ff;">B</span>
<span id="t128" class="t" style="left:704.24px;top:613.56px;font-size:11px;line-height:11px;color:#800080;letter-spacing:0.537px;">1=</span>
<span id="t129" class="t" style="left:721.04px;top:603.56px;font-size:11px;line-height:11px;color:#800080;letter-spacing:-0.015px;">0,00 B</span>
<span id="t130" class="t" style="left:438.14px;top:643.56px;font-size:11px;line-height:11px;color:#ff0000;letter-spacing:-0.168px;">Umax=336 мВ</span>
<span id="t131" class="t" style="left:438.14px;top:653.56px;font-size:11px;line-height:11px;color:#ff0000;letter-spacing:-0.108px;">Umin =-149 мВ</span>
<span id="t132" class="t" style="left:438.14px;top:663.56px;font-size:11px;line-height:11px;color:#ff0000;letter-spacing:-0.064px;">Ucp. =  -7 мВ</span>
<span id="t133" class="t" style="left:521.94px;top:643.56px;font-size:11px;line-height:11px;color:#0000ff;letter-spacing:0.173px;">Umax=</span>
<span id="t134" class="t" style="left:521.94px;top:653.56px;font-size:11px;line-height:11px;color:#0000ff;letter-spacing:-0.006px;">Umin =</span>
<span id="t135" class="t" style="left:521.94px;top:663.56px;font-size:11px;line-height:11px;color:#0000ff;letter-spacing:0.235px;">Ucp. =</span>
<div style="left:617px;top:644px;width:16px;height:16px;border:1px solid #8a8a84;border-radius:3px;background:linear-gradient(#fff,#e4e2dc 60%,#c9c6bd)"><svg style="left:4px;top:3px" width="8" height="8" viewBox="0 0 8 8"><polygon points="1.5,0.8 1.5,7.2 7,4" fill="#008000"/></svg></div>
<div style="left:634px;top:642.5px;width:65px;height:17.5px;border-top:2px solid #808080;border-left:2px solid #808080;border-right:1px solid #fff;border-bottom:1px solid #fff;background:#fff"></div>
<span id="t136" class="t" style="left:642.10px;top:647.70px;font-size:10px;line-height:10px;color:#000;letter-spacing:-0.239px;">0:00:00</span>
<div style="left:681px;top:644.5px;width:16px;height:7px;background:#d4d0c8;border:1px solid #fff;border-right-color:#808080;border-bottom-color:#808080"><svg style="left:4px;top:1px" width="6" height="4" viewBox="0 0 6 4"><polygon points="0.5,3.5 5.5,3.5 3,0.8" fill="#000"/></svg></div>
<div style="left:681px;top:652px;width:16px;height:7px;background:#d4d0c8;border:1px solid #fff;border-right-color:#808080;border-bottom-color:#808080"><svg style="left:4px;top:1px" width="6" height="4" viewBox="0 0 6 4"><polygon points="0.5,0.5 5.5,0.5 3,3.2" fill="#000"/></svg></div>
<span id="t137" class="t" style="left:625.14px;top:663.76px;font-size:11px;line-height:11px;color:#008000;letter-spacing:0.224px;">00:00:07:442</span>
<div style="left:701px;top:646px;width:84px;height:25px;border:1px solid #8a8a84;border-radius:4px;background:linear-gradient(#dddbd5,#e9e8e4 35%,#f1f0ed 75%,#f7f6f4)"></div>
<svg style="left:712px;top:649px" width="17" height="17" viewBox="0 0 17 17"><defs><linearGradient id="zp1" x1="0" y1="0" x2="1" y2="1"><stop offset="0" stop-color="#60f0a0"/><stop offset="0.35" stop-color="#38dc38"/><stop offset="1" stop-color="#58e848"/></linearGradient></defs><polygon points="1.2,1.4 9.8,8.4 1.2,15.4" fill="url(#zp1)" stroke="#1e8c28" stroke-width="1" stroke-linejoin="round"/><polygon points="7.6,1.4 15.8,8.4 7.6,15.4" fill="url(#zp1)" stroke="#1e8c28" stroke-width="1" stroke-linejoin="round"/></svg>
<span id="t138" class="t" style="left:730.91px;top:653.50px;font-size:11.5px;line-height:11.5px;color:#008000;font-weight:bold;letter-spacing:0.495px;">Запуск</span>
<div style="left:0px;top:686px;width:1023px;height:1px;background:#808080"></div>
<div style="left:0px;top:686px;width:1px;height:15px;background:#808080"></div>
<div style="left:0px;top:701px;width:1024px;height:1px;background:#fff"></div>
<div style="left:1023px;top:686px;width:1px;height:16px;background:#fff"></div>
<svg style="left:14px;top:8px" width="18" height="14" viewBox="0 0 18 14" ><defs><linearGradient id="fo1" x1="0" y1="0" x2="1" y2="1"><stop offset="0" stop-color="#fbf0a8"/><stop offset="1" stop-color="#f0c860"/></linearGradient>
<linearGradient id="fo2" x1="0" y1="0" x2="0" y2="1"><stop offset="0" stop-color="#fbe08c"/><stop offset="1" stop-color="#f2c050"/></linearGradient></defs>
<path d="M1.5,12.5 L1.5,1.5 L6.8,1.5 L8,3.5 L13.5,3.5 L13.5,6 L5,6 Z" fill="url(#fo1)" stroke="#b4ac8c" stroke-width="0.8"/>
<path d="M5.2,5.5 L16.6,5.5 L13.4,12.6 L1.8,12.6 Z" fill="url(#fo2)" stroke="#aaa27c" stroke-width="0.8"/>
<path d="M2,12.8 L13.4,12.8" stroke="#706848" stroke-width="0.8"/></svg>
<svg style="left:38px;top:8px" width="14" height="14" viewBox="0 0 14 14" ><defs><linearGradient id="fl1" x1="0" y1="0" x2="1" y2="0"><stop offset="0" stop-color="#b4b4f4"/><stop offset="0.15" stop-color="#8c8ce0"/><stop offset="1" stop-color="#7474cc"/></linearGradient>
<linearGradient id="fl2" x1="0" y1="0" x2="1" y2="1"><stop offset="0" stop-color="#d8d4c8"/><stop offset="0.5" stop-color="#d8d4cc"/><stop offset="0.52" stop-color="#ececf4"/><stop offset="1" stop-color="#ffffff"/></linearGradient></defs>
<path d="M0,0 L13.2,0 L14,0.8 L14,14 L0.8,14 L0,13.2 Z" fill="url(#fl1)"/>
<rect x="2.7" y="0.7" width="8.4" height="6.3" fill="url(#fl2)" stroke="#6a6ac8" stroke-width="0.5"/>
<rect x="3.9" y="9.1" width="6.2" height="4.2" fill="#e8e8f0"/><rect x="4.2" y="9.4" width="2.6" height="2.6" fill="#303040"/>
<rect x="12" y="1.6" width="1" height="1.2" fill="#5858a8"/></svg>
<svg style="left:72px;top:8px" width="16" height="15" viewBox="0 0 16 15" ><path d="M0.5,0.5 L8.5,0.5 L11,3 L11,13.5 L0.5,13.5 Z" fill="#d9d7d2" stroke="#a4b4d0" stroke-width="1"/>
<path d="M0.5,13.3 L11,13.3" stroke="#8898b8" stroke-width="1.2"/>
<path d="M8.5,0.5 L8.5,3 L11,3" fill="#c8d0e0" stroke="#8090b0" stroke-width="0.8"/>
<line x1="10.8" y1="10.6" x2="13.6" y2="12.9" stroke="#f0a848" stroke-width="2.6" stroke-linecap="round"/>
<circle cx="8" cy="7.6" r="3.7" fill="#f2f5fc" stroke="#c4ccd8" stroke-width="1"/>
<path d="M6,6.2 L7,7.2 L8.8,5.6" fill="none" stroke="#c8ccd4" stroke-width="0.8"/></svg>
<svg style="left:95px;top:8px" width="16" height="15" viewBox="0 0 16 15" ><path d="M3,5.5 L6,0.6 L14,0.6 L12.6,5.5 Z" fill="#f0f3fa" stroke="#b4c0d8" stroke-width="0.8"/>
<path d="M5,2 L12.6,2 M4.4,3.4 L12,3.4" stroke="#c8d0e0" stroke-width="0.6"/>
<path d="M0.5,7 L3,4.6 L15,4.6 L15,10.5 L12,13.8 L0.5,13.8 Z" fill="#d2d8e6" stroke="#9cacca" stroke-width="0.9"/>
<path d="M12,7 L15,4.6 L15,10.5 L12,13.8 Z" fill="#a8b6d0"/>
<rect x="0.9" y="7.2" width="11" height="1.3" fill="#f4f6fb"/>
<path d="M1,12.3 L5,12.3 L7,10.3 L12,10.3 L12,13.4 L1,13.4 Z" fill="#eef1f8"/>
<rect x="9" y="10.2" width="1.1" height="1.2" fill="#30a040"/><rect x="9" y="11.4" width="1.1" height="1.2" fill="#d03030"/>
<path d="M0.6,13.9 L12,13.9" stroke="#8494b4" stroke-width="1"/></svg>
<svg style="left:137px;top:6px" width="12" height="17" viewBox="0 0 12 17" ><defs><linearGradient id="pg1" x1="0" y1="0" x2="1" y2="1"><stop offset="0" stop-color="#58e8b0"/><stop offset="0.3" stop-color="#48e448"/><stop offset="1" stop-color="#70f050"/></linearGradient></defs><polygon points="1.2,1.2 10,8.6 1.2,15.8" fill="url(#pg1)" stroke="#3a9c50" stroke-width="1" stroke-linejoin="round"/></svg>
<svg style="left:155px;top:6px" width="18" height="17" viewBox="0 0 18 17" ><defs><linearGradient id="pg2" x1="0" y1="0" x2="1" y2="1"><stop offset="0" stop-color="#58e8b0"/><stop offset="0.3" stop-color="#48e448"/><stop offset="1" stop-color="#70f050"/></linearGradient></defs><polygon points="1.2,1.2 9.6,8.6 1.2,15.8" fill="url(#pg2)" stroke="#3a9c50" stroke-width="1" stroke-linejoin="round"/><polygon points="7.4,1.2 16,8.6 7.4,15.8" fill="url(#pg2)" stroke="#3a9c50" stroke-width="1" stroke-linejoin="round"/></svg>
<div style="left:176px;top:4px;width:23px;height:22px;background:#dddad3"></div>
<svg style="left:179px;top:6px" width="18" height="18" viewBox="0 0 18 18" ><defs><linearGradient id="st1" x1="0" y1="0" x2="0" y2="1"><stop offset="0" stop-color="#b4b4b4"/><stop offset="0.5" stop-color="#949494"/><stop offset="1" stop-color="#8a8a8a"/></linearGradient></defs><circle cx="9" cy="9" r="8.3" fill="url(#st1)" stroke="#e6e4de" stroke-width="0.8"/><path d="M5.6,5.6 L12.4,12.4 M12.4,5.6 L5.6,12.4" stroke="#dcd9d0" stroke-width="2" stroke-linecap="round"/></svg>
<svg style="left:218px;top:6px" width="17" height="17" viewBox="0 0 17 17" ><polyline points="0.6,5.4 1.6,3.4 3,1.8 4.4,2.6 5.6,5 6.6,5.8 7.8,3.4 9,1.6 10.4,2.4 11.6,4.8 12.6,5.8 13.8,4 15,1.6 16,3" fill="none" stroke="#ff3c3c" stroke-width="1.25"/><rect x="0.4" y="2.6" width="1" height="1" fill="#ff3c3c"/><rect x="4.6" y="0.6" width="1" height="1" fill="#ff3c3c"/><rect x="14.6" y="4.6" width="1" height="1" fill="#ff3c3c"/><rect x="15.4" y="0.6" width="1" height="1" fill="#ff3c3c"/><rect x="7" y="1.2" width="1" height="1" fill="#ff3c3c"/><polygon points="5.8,8.4 11.2,8.4 8.5,11.2" fill="#ff3c3c"/><rect x="8" y="6.8" width="1" height="2" fill="#ff3c3c"/><path d="M0.4,15.6 C1.6,15.6 2,12.8 3.6,12.8 C5.2,12.8 5.2,15.6 6.8,15.6 C8.4,15.6 8.4,12.8 10,12.8 C11.6,12.8 11.6,15.6 13.2,15.6 C14.6,15.6 15,13.4 15.8,12.6" fill="none" stroke="#ff3c3c" stroke-width="1.25"/></svg>
<svg style="left:254px;top:6px" width="17" height="17" viewBox="0 0 17 17" ><polyline points="0.6,5.4 1.6,3.4 3,1.8 4.4,2.6 5.6,5 6.6,5.8 7.8,3.4 9,1.6 10.4,2.4 11.6,4.8 12.6,5.8 13.8,4 15,1.6 16,3" fill="none" stroke="#3c3cff" stroke-width="1.25"/><rect x="0.4" y="2.6" width="1" height="1" fill="#3c3cff"/><rect x="4.6" y="0.6" width="1" height="1" fill="#3c3cff"/><rect x="14.6" y="4.6" width="1" height="1" fill="#3c3cff"/><rect x="15.4" y="0.6" width="1" height="1" fill="#3c3cff"/><rect x="7" y="1.2" width="1" height="1" fill="#3c3cff"/><polygon points="5.8,8.4 11.2,8.4 8.5,11.2" fill="#3c3cff"/><rect x="8" y="6.8" width="1" height="2" fill="#3c3cff"/><path d="M0.4,15.6 C1.6,15.6 2,12.8 3.6,12.8 C5.2,12.8 5.2,15.6 6.8,15.6 C8.4,15.6 8.4,12.8 10,12.8 C11.6,12.8 11.6,15.6 13.2,15.6 C14.6,15.6 15,13.4 15.8,12.6" fill="none" stroke="#3c3cff" stroke-width="1.25"/></svg>
<svg style="left:240px;top:14px" width="5" height="3" viewBox="0 0 5 3" shape-rendering="crispEdges"><rect x="0" y="0" width="5" height="1"/><rect x="1" y="1" width="3" height="1"/><rect x="2" y="2" width="1" height="1"/></svg>
<svg style="left:276px;top:14px" width="5" height="3" viewBox="0 0 5 3" shape-rendering="crispEdges"><rect x="0" y="0" width="5" height="1"/><rect x="1" y="1" width="3" height="1"/><rect x="2" y="2" width="1" height="1"/></svg>
<svg style="left:312px;top:14px" width="5" height="3" viewBox="0 0 5 3" shape-rendering="crispEdges"><rect x="0" y="0" width="5" height="1"/><rect x="1" y="1" width="3" height="1"/><rect x="2" y="2" width="1" height="1"/></svg>
<svg style="left:348px;top:14px" width="5" height="3" viewBox="0 0 5 3" shape-rendering="crispEdges"><rect x="0" y="0" width="5" height="1"/><rect x="1" y="1" width="3" height="1"/><rect x="2" y="2" width="1" height="1"/></svg>
<svg style="left:292px;top:7px" width="13" height="16" viewBox="0 0 13 16" ><defs><linearGradient id="ca1" x1="0" y1="0" x2="1" y2="1"><stop offset="0" stop-color="#e4ecfa"/><stop offset="1" stop-color="#b8c6e4"/></linearGradient></defs>
<rect x="0.5" y="0.5" width="11.4" height="14.8" rx="1.2" fill="url(#ca1)" stroke="#8fa0c8" stroke-width="1"/>
<rect x="2" y="1.8" width="8.4" height="2.2" rx="0.8" fill="#78a8ec"/>
<g fill="#e45868"><rect x="2.2" y="5.6" width="1.7" height="1.6"/><rect x="5.4" y="5.6" width="1.7" height="1.6"/><rect x="8.6" y="5.6" width="1.7" height="1.6"/></g>
<g fill="#6a8ad8"><rect x="2.2" y="8.6" width="1.7" height="1.6"/><rect x="5.4" y="8.6" width="1.7" height="1.6"/><rect x="8.6" y="8.6" width="1.7" height="1.6"/><rect x="2.2" y="11.6" width="1.7" height="1.6"/><rect x="5.4" y="11.6" width="1.7" height="1.6"/><rect x="8.6" y="11.6" width="1.7" height="1.6"/></g></svg>
<svg style="left:326px;top:9px" width="17" height="13" viewBox="0 0 17 13" ><path d="M0.4,7.4 L1.6,6.6 L3.4,11.4 L5.2,1.5 L16,1.5" fill="none" stroke="#c05040" stroke-width="1.1"/>
<path d="M15.8,4.6 C14.6,5.2 13.6,10.4 10.4,10.4 C8.2,10.4 7.4,8.8 7.4,7.6 C7.4,6 8.4,4.6 10.4,4.6 C13.6,4.6 14.4,10 16,10.4" fill="none" stroke="#5038c8" stroke-width="1.4"/></svg>
<svg style="left:363px;top:7px" width="13" height="16" viewBox="0 0 13 16" ><defs><linearGradient id="sp1" x1="0" y1="0" x2="0" y2="1"><stop offset="0" stop-color="#f6e8a0"/><stop offset="0.5" stop-color="#e0c868"/><stop offset="1" stop-color="#a88c38"/></linearGradient>
<linearGradient id="sp2" x1="0" y1="0" x2="1" y2="0"><stop offset="0" stop-color="#d8c070"/><stop offset="0.5" stop-color="#f4e8a8"/><stop offset="1" stop-color="#c0a448"/></linearGradient></defs>
<path d="M0.8,6 Q0.4,8 0.8,10 L3,10.6 L8.6,14.6 L8.6,1 L3,5.4 Z" fill="url(#sp1)" stroke="#b09848" stroke-width="0.6"/>
<ellipse cx="9" cy="7.8" rx="2.9" ry="6.9" fill="url(#sp2)" stroke="#a48c3c" stroke-width="0.7"/>
<ellipse cx="9" cy="7.8" rx="1" ry="2.2" fill="#c8ac50" stroke="#8c7430" stroke-width="0.5"/></svg>
</body></html>
